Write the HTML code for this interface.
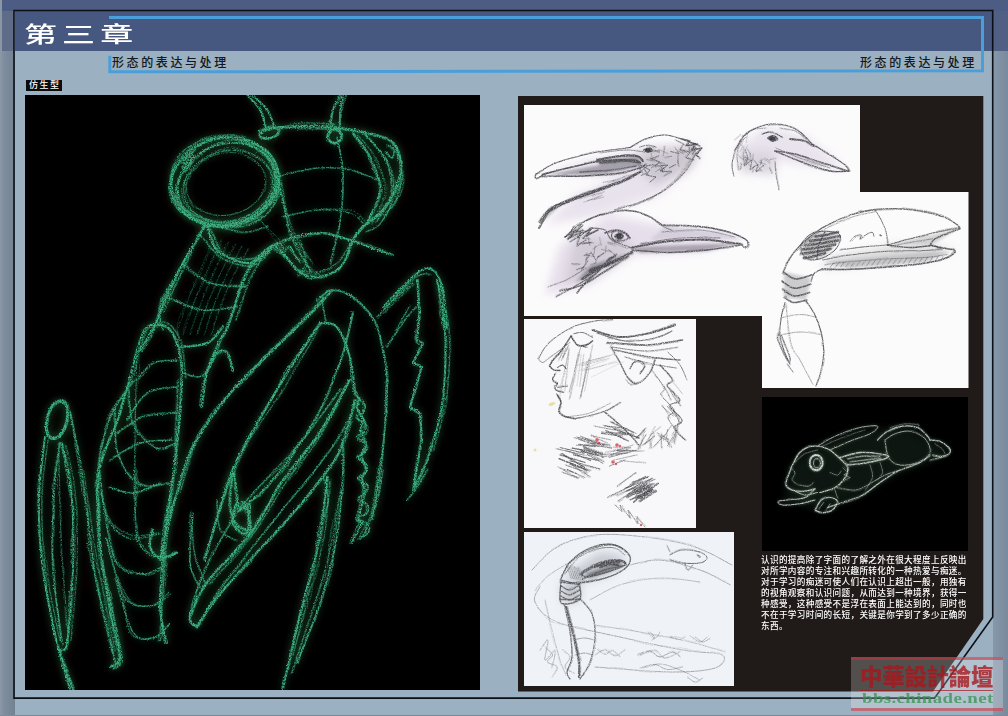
<!DOCTYPE html>
<html lang="zh">
<head>
<meta charset="utf-8">
<title>第三章 形态的表达与处理</title>
<style>
html,body{margin:0;padding:0;}
body{width:1008px;height:716px;overflow:hidden;position:relative;background:#9bb0c0;font-family:"Liberation Sans","Noto Sans CJK SC",sans-serif;}
.abs{position:absolute;}
#topstrip{left:0;top:0;width:1008px;height:11px;background:#4c5c83;}
#lm1{left:0;top:0;width:14px;height:51px;background:#5f6c88;}
#lm2{left:0;top:51px;width:14.5px;height:665px;background:linear-gradient(90deg,#8492a2,#728293);}
#ledge{left:0;top:0;width:2px;height:716px;background:#8a96a6;}
#rm1{left:993px;top:0;width:15px;height:51px;background:#525f84;}
#rm2{left:993px;top:51px;width:15px;height:665px;background:linear-gradient(90deg,#8797aa,#7a8a9d);}
#header{left:15px;top:11px;width:978px;height:40.4px;background:#465780;}
#title{left:24px;top:19.5px;font-size:22px;line-height:30px;color:#fff;white-space:nowrap;transform-origin:0 0;transform:scaleX(1.5);letter-spacing:3.4px;font-weight:500;}
.sub{top:54.6px;font-weight:500;font-size:12px;line-height:16px;color:#111820;letter-spacing:2.6px;white-space:nowrap;}
#label{left:26px;top:80px;width:36px;height:11px;background:#0c0c0c;color:#fff;font-size:9px;line-height:11px;font-weight:500;text-align:center;letter-spacing:1.5px;text-indent:1.5px;white-space:nowrap;}
#lpanel{left:25px;top:95px;width:455px;height:595px;background:#000;}
#para{left:761px;top:554.7px;width:215px;color:#fff;font-size:8.6px;line-height:11px;font-weight:500;white-space:nowrap;letter-spacing:.35px;}
.img{background:#fbfbfb;}
#wm{left:851px;top:657px;width:152px;height:48px;background:rgba(255,255,255,.23);border-top:3px solid rgba(200,50,60,.6);border-bottom:3px solid rgba(200,50,60,.6);}
#wmc{position:absolute;left:9px;top:4.6px;font-family:"Liberation Sans","Noto Sans CJK TC",sans-serif;font-weight:900;font-size:22.5px;line-height:26px;color:rgba(170,20,26,.78);white-space:nowrap;letter-spacing:-.3px;border-bottom:1.5px solid rgba(170,20,26,.7);height:25px;}
#wme{position:absolute;left:10.5px;top:27.8px;font-family:"Liberation Serif",serif;font-weight:bold;font-size:15.5px;line-height:20px;color:rgba(55,145,80,.75);white-space:nowrap;letter-spacing:.3px;transform-origin:0 0;transform:scaleX(1.22);}
</style>
</head>
<body>
<div class="abs" id="lm1"></div><div class="abs" id="lm2"></div>
<div class="abs" id="rm1"></div><div class="abs" id="rm2"></div>
<div class="abs" id="topstrip"></div>
<div class="abs" id="ledge"></div>
<div class="abs" id="header"></div>
<div class="abs" style="left:0;top:715px;width:1008px;height:1px;background:#7b8b9b"></div>
<!-- frame lines -->
<svg class="abs" style="left:0;top:0" width="1008" height="716" viewBox="0 0 1008 716">
  <path d="M14 698.1V10.5H992.7V617L934.5 698.1Z" fill="none" stroke="#0b0f18" stroke-width="1.6"/>
  <path d="M109 17.5H982.5V70.8L109.8 71.8V55.7" fill="none" stroke="#4a9fda" stroke-width="3"/>
  <path d="M518 96H983.3V619L933 691.5H518Z" fill="#201a18"/>
</svg>
<div class="abs" id="title">第三章</div>
<div class="abs sub" style="left:112px">形态的表达与处理</div>
<div class="abs sub" style="left:860px">形态的表达与处理</div>
<div class="abs" id="label">仿生型</div>
<svg class="abs" style="left:25px;top:95px" width="455" height="595" viewBox="25 95 455 595">
<defs>
<filter id="glow" x="-5%" y="-5%" width="110%" height="110%"><feGaussianBlur stdDeviation="3.5"/></filter>
<filter id="glow2" x="-10%" y="-10%" width="120%" height="120%"><feGaussianBlur stdDeviation="9"/></filter>
<filter id="chalk" x="-2%" y="-2%" width="104%" height="104%"><feTurbulence type="fractalNoise" baseFrequency="0.75" numOctaves="2" seed="3" result="n"/><feDisplacementMap in="SourceGraphic" in2="n" scale="2.6" xChannelSelector="R" yChannelSelector="G" result="d"/><feColorMatrix in="n" type="matrix" values="0 0 0 0 0 0 0 0 0 0 0 0 0 0 0 3.4 0 0 0 -1.05" result="a"/><feComposite in="d" in2="a" operator="in"/></filter>
<filter id="wob" x="-2%" y="-2%" width="104%" height="104%"><feTurbulence type="fractalNoise" baseFrequency="0.018" numOctaves="2" seed="11" result="w"/><feDisplacementMap in="SourceGraphic" in2="w" scale="9" xChannelSelector="R" yChannelSelector="G" result="d0"/><feTurbulence type="fractalNoise" baseFrequency="0.8" numOctaves="2" seed="8" result="n"/><feDisplacementMap in="d0" in2="n" scale="2.4" xChannelSelector="G" yChannelSelector="R" result="d"/><feColorMatrix in="n" type="matrix" values="0 0 0 0 0 0 0 0 0 0 0 0 0 0 0 0 3.0 0 0 -0.85" result="a"/><feComposite in="d" in2="a" operator="in"/></filter>
<g id="mpaths" fill="none" stroke-linecap="round" stroke-linejoin="round">
<path d="M260 132C263.8 131.2 271.3 127.8 283 127C294.7 126.2 316.7 126.2 330 127C343.3 127.8 353 129.8 363 132C373 134.2 383.8 135.8 390 140C396.2 144.2 398.7 149.8 400 157C401.3 164.2 400.8 174.2 398 183C395.2 191.8 388.8 202.7 383 210C377.2 217.3 368 222 363 227C358 232 355.7 235 353 240C350.3 245 349.7 252 347 257C344.3 262 342 266.7 337 270C332 273.3 323.2 276.7 317 277C310.8 277.3 305.7 276 300 272C294.3 268 287.5 257.5 283 253C278.5 248.5 274.7 246.3 273 245" stroke-width="2.5"/>
<path d="M353 133C355.8 137 365.5 147.5 370 157C374.5 166.5 380.5 179 380 190C379.5 201 369.2 217.5 367 223" stroke-width="2.2"/>
<path d="M363 132C366.8 136.7 381.3 149.5 386 160C390.7 170.5 392.7 184.7 391 195C389.3 205.3 378.5 217.5 376 222" stroke-width="1.6" opacity="0.80"/>
<path d="M337 137C338 143 342.5 158.7 343 173C343.5 187.3 342.2 208 340 223C337.8 238 331.7 256.3 330 263" stroke-width="1.6" opacity="0.80"/>
<path d="M278 177C280 185.8 284.7 214.5 290 230C295.3 245.5 306.7 263.3 310 270" stroke-width="1.8" opacity="0.90"/>
<path d="M277 177C283.7 175.5 304.8 169.2 317 168C329.2 166.8 340 168 350 170C360 172 372.5 178.3 377 180" stroke-width="1.3" opacity="0.70"/>
<path d="M283 217C288.7 215.8 305.8 210.7 317 210C328.2 209.3 342.3 210.8 350 213C357.7 215.2 360.8 221.3 363 223" stroke-width="1.3" opacity="0.70"/>
<path d="M273 245C276.3 243.7 284.7 239 293 237C301.3 235 313.5 232.5 323 233C332.5 233.5 341 237.2 350 240C359 242.8 369.8 247.5 377 250C384.2 252.5 390.3 254.2 393 255" stroke-width="2.0"/>
<path d="M273 245C274.2 244.7 278 242.2 280 243C282 243.8 283.3 249.5 285 250C286.7 250.5 288.3 245.2 290 246C291.7 246.8 293.3 252.3 295 255C296.7 257.7 299.2 260.8 300 262" stroke-width="1.6"/>
<path d="M255 215C260.8 220.8 279.2 240 290 250C300.8 260 315 270.8 320 275" stroke-width="1.0" opacity="0.60"/>
<path d="M300 240C301 243.7 306.3 256 306 262C305.7 268 299.3 273.7 298 276" stroke-width="1.2" opacity="0.70"/>
<path d="M388 145C389 145.8 393.3 147.8 394 150C394.7 152.2 393.3 157.7 392 158C390.7 158.3 387 153 386 152" stroke-width="1.4" opacity="0.90"/>
<path d="M248 95C250 97.5 256.8 104.2 260 110C263.2 115.8 265.8 126.7 267 130" stroke-width="1.8"/>
<path d="M253 95C255.3 97.5 263.3 104.5 267 110C270.7 115.5 273.7 125 275 128" stroke-width="1.8"/>
<path d="M340 95C338.8 97.5 334.7 103.7 333 110C331.3 116.3 330.5 129.2 330 133" stroke-width="1.8"/>
<path d="M343 95C342.5 98 340.5 106.7 340 113C339.5 119.3 340 129.7 340 133" stroke-width="1.8"/>
<path d="M207 223C203 229.7 189.7 250.7 183 263C176.3 275.3 172 286 167 297C162 308 157.5 320.2 153 329C148.5 337.8 142.2 346.5 140 350" stroke-width="2.4"/>
<path d="M273 245C269.7 248 258.5 255.5 253 263C247.5 270.5 244.3 279 240 290C235.7 301 230.3 320.7 227 329C223.7 337.3 223.3 332.7 220 340C216.7 347.3 210 361.8 207 373C204 384.2 202.8 401.3 202 407" stroke-width="2.4"/>
<path d="M207 223C208.7 227.5 209.8 243.3 217 250C224.2 256.7 240.7 263.5 250 263C259.3 262.5 269.2 249.7 273 247" stroke-width="2.2"/>
<path d="M210 228C212.5 232.5 217.5 250 225 255C232.5 260 247.8 259.2 255 258C262.2 256.8 265.8 249.7 268 248" stroke-width="1.4" opacity="0.70"/>
<path d="M183 263C187.5 266.3 199.3 279 210 283C220.7 287 240.8 286.3 247 287" stroke-width="1.6" opacity="0.80"/>
<path d="M167 297C172.5 299.2 188.3 308.3 200 310C211.7 311.7 230.8 307.5 237 307" stroke-width="1.6" opacity="0.80"/>
<path d="M173 280C170.8 284.5 161.7 298.7 160 307C158.3 315.3 162.5 326.2 163 330" stroke-width="1.6" opacity="0.80"/>
<path d="M180 347C184.5 346.3 199.8 346.3 207 343C214.2 339.7 220.3 329.7 223 327" stroke-width="2.0"/>
<path d="M183 373C185.8 373.7 195.5 378 200 377C204.5 376 208.3 368.7 210 367" stroke-width="1.6" opacity="0.80"/>
<path d="M214 238C210.3 246.7 198.3 273.8 192 290C185.7 306.2 178.7 327.5 176 335" stroke-width="0.9" opacity="0.45"/>
<path d="M221 240C217.3 248.3 205.3 274.2 199 290C192.7 305.8 185.7 327.5 183 335" stroke-width="0.9" opacity="0.45"/>
<path d="M228 242C224.3 250 212.3 274.5 206 290C199.7 305.5 192.7 327.5 190 335" stroke-width="0.9" opacity="0.45"/>
<path d="M235 244C231.3 251.7 219.3 274.8 213 290C206.7 305.2 199.7 327.5 197 335" stroke-width="0.9" opacity="0.45"/>
<path d="M242 246C238.3 253.3 226.3 275.2 220 290C213.7 304.8 206.7 327.5 204 335" stroke-width="0.9" opacity="0.45"/>
<path d="M249 248C245.3 255 233.3 275.5 227 290C220.7 304.5 213.7 327.5 211 335" stroke-width="0.9" opacity="0.45"/>
<path d="M137 350C134.2 360.5 126.2 393.5 120 413C113.8 432.5 103.5 449.2 100 467C96.5 484.8 98.7 504.5 99 520C99.3 535.5 100.2 545 102 560C103.8 575 107 593.8 110 610C113 626.2 120 647.5 120 657C120 666.5 111.7 665.3 110 667" stroke-width="2.2"/>
<path d="M137 350C138.7 346.2 142 330.8 147 327C152 323.2 161.8 323.7 167 327C172.2 330.3 175.5 338.2 178 347C180.5 355.8 182.2 363.3 182 380C181.8 396.7 179.5 423.8 177 447C174.5 470.2 169.8 493 167 519C164.2 545 160 582.3 160 603C160 623.7 165.8 636.3 167 643" stroke-width="2.2"/>
<path d="M137 350C136.7 363.3 135.5 405 135 430C134.5 455 134.2 488.3 134 500" stroke-width="1.2" opacity="0.60"/>
<path d="M137 380C139.7 377.2 146.3 366.3 153 363C159.7 359.7 173 360.5 177 360" stroke-width="1.5" opacity="0.80"/>
<path d="M127 420C130.3 415.5 138.7 398.5 147 393C155.3 387.5 172 388 177 387" stroke-width="1.5" opacity="0.80"/>
<path d="M117 433C121.3 430.3 133 420.3 143 417C153 413.7 171.3 413.7 177 413" stroke-width="1.5" opacity="0.80"/>
<path d="M110 460C115 457.2 129.5 446.3 140 443C150.5 439.7 167.5 440.5 173 440" stroke-width="1.5" opacity="0.80"/>
<path d="M110 487C113.8 488 124.7 493.7 133 493C141.3 492.3 155.5 484.7 160 483" stroke-width="1.5" opacity="0.80"/>
<path d="M153 530C152.5 532.8 148.8 542.3 150 547C151.2 551.7 155.5 557 160 558C164.5 559 174.2 553.8 177 553" stroke-width="2.4"/>
<path d="M135 470C135.3 481.2 134 522.5 137 537C140 551.5 150.3 553.7 153 557" stroke-width="1.6" opacity="0.80"/>
<path d="M45 437C44.2 444.2 41 466.2 40 480C39 493.8 38.5 505 39 520C39.5 535 40 549.5 43 570C46 590.5 52.5 623.2 57 643C61.5 662.8 67.8 681.3 70 689" stroke-width="2.0"/>
<path d="M70 413C71.7 420.8 77 442.2 80 460C83 477.8 85.3 500 88 520C90.7 540 92.7 561.7 96 580C99.3 598.3 104.7 615.8 108 630C111.3 644.2 114.7 659.2 116 665" stroke-width="1.8" opacity="0.90"/>
<path d="M60 443C59.2 449.2 56.2 467.3 55 480C53.8 492.7 53.3 504 53 519C52.7 534 51.5 549.3 53 570C54.5 590.7 60.5 630.8 62 643" stroke-width="1.8" opacity="0.90"/>
<path d="M62 443C63.3 449.2 68.2 467.3 70 480C71.8 492.7 72.5 504 73 519C73.5 534 74 549.3 73 570C72 590.7 69.2 629.3 67 643C64.8 656.7 59 644.3 60 652C61 659.7 70.8 682.8 73 689" stroke-width="2.0"/>
<path d="M333 290C325.3 297.8 303.7 320.3 287 337C270.3 353.7 248.7 371.7 233 390C217.3 408.3 202.3 429.8 193 447C183.7 464.2 180.8 481 177 493C173.2 505 172.8 507.8 170 519C167.2 530.2 161.7 553.2 160 560" stroke-width="2.4"/>
<path d="M320 323C313.8 332.5 296.8 357.2 283 380C269.2 402.8 248 436.8 237 460C226 483.2 222.3 502.3 217 519C211.7 535.7 207 553.2 205 560" stroke-width="2.4"/>
<path d="M353 313C350.8 321.3 346.7 344.7 340 363C333.3 381.3 324.2 403.5 313 423C301.8 442.5 285.2 465.5 273 480C260.8 494.5 245.5 505 240 510" stroke-width="2.0" opacity="0.90"/>
<path d="M317 300C319.7 298.3 326.3 290 333 290C339.7 290 349.7 293.8 357 300C364.3 306.2 372 313.7 377 327C382 340.3 386 360 387 380C388 400 385.3 423.8 383 447C380.7 470.2 374.7 507 373 519" stroke-width="1.8" opacity="0.90"/>
<path d="M320 323C322.8 323.7 332 321.3 337 327C342 332.7 347 346.5 350 357C353 367.5 354.2 384.5 355 390" stroke-width="2.2"/>
<path d="M322 300L326 322" stroke-width="1.4" opacity="0.80"/>
<path d="M355 390L360 400L357 408L364 420L360 430L366 445L361 455L367 470L362 478L365 493L358 520L362 523L352 543" stroke-width="2.0"/>
<path d="M383 470C382 475.5 380.3 491.8 377 503C373.7 514.2 365.3 531.3 363 537" stroke-width="1.4" opacity="0.80"/>
<path d="M350 380C344.5 389.5 328.2 420.3 317 437C305.8 453.7 293.7 464.5 283 480C272.3 495.5 265.7 512.8 253 530C240.3 547.2 217.5 568.5 207 583C196.5 597.5 191.7 609.7 190 617C188.3 624.3 195.8 625.3 197 627" stroke-width="2.4"/>
<path d="M355 400C352.5 408.3 345.8 436.7 340 450C334.2 463.3 328.8 468.3 320 480C311.2 491.7 299.2 506.2 287 520C274.8 533.8 259.3 549.2 247 563C234.7 576.8 221.3 592.3 213 603C204.7 613.7 199.7 623 197 627" stroke-width="2.2"/>
<path d="M237 503C236.3 506.3 231.3 518 233 523C234.7 528 244.2 536.3 247 533C249.8 529.7 249.5 508 250 503" stroke-width="2.4"/>
<path d="M233 467C233.7 471.3 235.8 485.8 237 493C238.2 500.2 237.8 508.3 240 510C242.2 511.7 248.3 504.2 250 503" stroke-width="2.0"/>
<path d="M193 513C192.5 521.3 188.8 550.7 190 563C191.2 575.3 198.3 583 200 587" stroke-width="1.6" opacity="0.80"/>
<path d="M217 500C217.5 505 216.7 523.3 220 530C223.3 536.7 234.2 538.3 237 540" stroke-width="1.4" opacity="0.70"/>
<path d="M207 373C208.7 369.7 213.7 356.5 217 353C220.3 349.5 224.3 349.2 227 352C229.7 354.8 232 367 233 370" stroke-width="2.2"/>
<path d="M327 477C325.8 487 324 516 320 537C316 558 308 583 303 603C298 623 293.3 642.7 290 657C286.7 671.3 284.2 683.7 283 689" stroke-width="2.2"/>
<path d="M342 440C342.2 445 343.8 453.8 343 470C342.2 486.2 340.8 514.8 337 537C333.2 559.2 326.7 582 320 603C313.3 624 300.8 653 297 663" stroke-width="1.8" opacity="0.90"/>
<path d="M323 477C323.8 480.3 327.7 490 328 497C328.3 504 325.5 515.3 325 519" stroke-width="1.4" opacity="0.80"/>
<path d="M383 307C388.7 301.3 408.7 279.2 417 273C425.3 266.8 428.7 267.2 433 270C437.3 272.8 440.7 280.3 443 290C445.3 299.7 446.3 321.7 447 328" stroke-width="2.0"/>
<path d="M437 280C438.3 288.3 444 310.5 445 330C446 349.5 445.5 376.5 443 397C440.5 417.5 435 437.5 430 453C425 468.5 415.8 483.8 413 490" stroke-width="2.0"/>
<path d="M417 280L420 313L417 340L423 343L413 363L422 367L410 407L420 413L422 440L413 490" stroke-width="2.2"/>
<path d="M377 317C380.3 313.7 391 302.7 397 297C403 291.3 410.3 285.3 413 283" stroke-width="1.6" opacity="0.80"/>
<path d="M387 347C390.3 342 402 323.7 407 317C412 310.3 415.3 308.7 417 307" stroke-width="1.6" opacity="0.80"/>
<path d="M427 470C425.3 472.8 420.3 482 417 487C413.7 492 408.7 497.8 407 500" stroke-width="1.4" opacity="0.80"/>
<path d="M396 330L410 305" stroke-width="1.2" opacity="0.70"/>
<path d="M365 134C368.8 138.7 383.3 151.7 388 162C392.7 172.3 394.3 185.7 393 196C391.7 206.3 384.5 218 380 224C375.5 230 368.3 230.7 366 232" stroke-width="1.4" opacity="0.70"/>
<path d="M358 135C361.2 139.2 372.5 150.5 377 160C381.5 169.5 385.8 181.3 385 192C384.2 202.7 374.2 218.7 372 224" stroke-width="1.2" opacity="0.60"/>
<path d="M396 150C397 154.2 402 166.7 402 175C402 183.3 399 193.2 396 200C393 206.8 386 213.3 384 216" stroke-width="1.6" opacity="0.80"/>
<path d="M283 128C285.8 127.2 291.3 123.7 300 123C308.7 122.3 329.2 123.8 335 124" stroke-width="1.4" opacity="0.70"/>
<path d="M280 190C282.5 197.5 289.7 223 295 235C300.3 247 309.2 257.5 312 262" stroke-width="1.2" opacity="0.60"/>
<path d="M300 270C303 270.3 311.7 273.3 318 272C324.3 270.7 332.7 266.7 338 262C343.3 257.3 348 247 350 244" stroke-width="1.4" opacity="0.70"/>
<path d="M215 226C220 227 236.2 232 245 232C253.8 232 264.2 227 268 226" stroke-width="1.4" opacity="0.70"/>
<path d="M200 235C203.7 238.8 213.3 252.8 222 258C230.7 263.2 244 267 252 266C260 265 267 254.3 270 252" stroke-width="1.4" opacity="0.70"/>
<path d="M192 250C189.7 255 182.7 269.7 178 280C173.3 290.3 166.3 306.7 164 312" stroke-width="1.4" opacity="0.70"/>
<path d="M262 258C259.7 262.5 252.3 274.7 248 285C243.7 295.3 238 314.2 236 320" stroke-width="1.4" opacity="0.70"/>
<path d="M142 330C145.8 328.7 158.7 320.3 165 322C171.3 323.7 176.5 330.7 180 340C183.5 349.3 185 371.7 186 378" stroke-width="1.3" opacity="0.60"/>
<path d="M325 296C317.8 303.3 296.8 325 282 340C267.2 355 250 369.3 236 386C222 402.7 207.3 422.3 198 440C188.7 457.7 183 483.3 180 492" stroke-width="1.3" opacity="0.65"/>
<path d="M318 330C312.3 339.7 297 367 284 388C271 409 250.7 435.3 240 456C229.3 476.7 223.3 502.7 220 512" stroke-width="1.2" opacity="0.60"/>
<path d="M384 310C389 304.7 406.3 284 414 278C421.7 272 427.3 274.7 430 274" stroke-width="1.3" opacity="0.70"/>
<path d="M440 285C441.5 292.5 447.8 311.8 449 330C450.2 348.2 449.5 374 447 394C444.5 414 436.2 440.7 434 450" stroke-width="1.3" opacity="0.65"/>
<path d="M330 480C329 489.7 327.8 517.7 324 538C320.2 558.3 312.2 582.5 307 602C301.8 621.5 295.3 646.2 293 655" stroke-width="1.3" opacity="0.65"/>
<path d="M348 384C343 393.3 328.3 423.7 318 440C307.7 456.3 296.3 467 286 482C275.7 497 268.7 513 256 530C243.3 547 217.7 575 210 584" stroke-width="1.3" opacity="0.65"/>
<path d="M48 440C47.2 447 44 468.3 43 482C42 495.7 41.5 507.3 42 522C42.5 536.7 43 550.3 46 570C49 589.7 57.7 628.3 60 640" stroke-width="1.2" opacity="0.60"/>
<path d="M66 445C67.3 451.2 72.2 469.5 74 482C75.8 494.5 76.5 505.3 77 520C77.5 534.7 78 550 77 570C76 590 72 628.3 71 640" stroke-width="1.2" opacity="0.60"/>
<path d="M99.5 461.3C100.6 470.3 101.4 502.6 106.3 515.4C111.2 528.2 119.8 535 128.8 538C137.9 541 155.2 534.3 160.4 533.5" stroke-width="1.6" opacity="0.80"/>
<path d="M101.7 492.9C104 504.2 108.5 547 115.3 560.6C122.1 574.1 134.1 573.4 142.4 574.1C150.7 574.9 161.2 566.6 165 565.1" stroke-width="1.6" opacity="0.80"/>
<path d="M106.3 538C109.3 547.8 116.8 585.4 124.3 596.7C131.8 608 143.9 606.5 151.4 605.7C158.9 605 166.5 594.4 169.5 592.2" stroke-width="1.6" opacity="0.80"/>
<path d="M115.3 578.6C118.3 587.7 126.6 623 133.4 632.8C140.1 642.6 149.9 638.8 155.9 637.3C161.9 635.8 167.2 626 169.5 623.8" stroke-width="1.6" opacity="0.80"/>
<path d="M115.3 407.1C115.7 414.6 113.8 439.4 117.6 452.2C121.3 465 129.2 478.6 137.9 483.8C146.5 489.1 164.2 483.8 169.5 483.8" stroke-width="1.6" opacity="0.80"/>
<path d="M128.8 389C129.6 395 128.8 415.4 133.4 425.1C137.9 434.9 148.8 444.7 155.9 447.7C163.1 450.7 172.9 444 176.2 443.2" stroke-width="1.6" opacity="0.80"/>
<path d="M133.4 380C129.6 386 116.4 402.6 110.8 416.1C105.1 429.7 101.7 444.7 99.5 461.3C97.2 477.8 96.5 497.4 97.2 515.4C98 533.5 101 551.6 104 569.6C107 587.7 112.3 608.7 115.3 623.8C118.3 638.8 122.4 652.4 122.1 659.9C121.7 667.4 114.5 667.4 113 668.9" stroke-width="1.8" opacity="0.80"/>
<path d="M178.5 380C177.7 395 176.2 440.2 174 470.3C171.7 500.4 167.2 532 165 560.6C162.7 589.2 161.2 628.3 160.4 641.9" stroke-width="1.5" opacity="0.70"/>
<path d="M83.7 470.3C85.9 485.3 92 530.5 97.2 560.6C102.5 590.7 112.3 635.8 115.3 650.9" stroke-width="1.2" opacity="0.60"/>
<path d="M58.9 443.2C59.2 459 59.6 506.4 61.1 538C62.6 569.6 66.8 617 67.9 632.8" stroke-width="1.2" opacity="0.60"/>
<path d="M341 389C333.5 398.8 312.4 428.2 295.9 447.7C279.3 467.3 256.8 486.1 241.7 506.4C226.7 526.7 214.2 551.6 205.6 569.6C196.9 587.7 191.3 605.4 189.8 614.8C188.3 624.2 195.4 624.2 196.6 626" stroke-width="1.6" opacity="0.75"/>
<path d="M359.1 398.1C354.6 406.3 345.5 428.2 332 447.7C318.5 467.3 295.1 493.6 277.8 515.4C260.5 537.3 241.7 560.2 228.2 578.6C214.6 597.1 201.8 618.1 196.6 626" stroke-width="1.6" opacity="0.75"/>
<path d="M232.7 470.3C232.3 476.3 229.7 497.4 230.4 506.4C231.2 515.4 233.8 520.7 237.2 524.5C240.6 528.2 249.2 532 250.7 529C252.2 526 247.7 510.9 246.2 506.4C244.7 501.9 242.5 502.6 241.7 501.9" stroke-width="2.2" opacity="0.90"/>
<path d="M192 515.4C192.4 521.5 192 540.3 194.3 551.6C196.6 562.8 203.7 577.9 205.6 583.2" stroke-width="1.4" opacity="0.70"/>
<path d="M341 488.4C338.8 500.4 333.5 536.5 327.5 560.6C321.5 584.7 310.9 614 304.9 632.8C298.9 651.6 293.6 666.7 291.4 673.5" stroke-width="1.4" opacity="0.70"/>
<path d="M354.6 393.5C356.2 395.2 363 400.5 364.5 403.5C366 406.5 365 409.3 363.6 411.6C362.2 413.9 355.7 415 355.9 417C356.2 419.1 363.8 421.3 365.2 423.8C366.6 426.3 365.7 429.7 364.3 431.9C362.8 434.2 356.3 435.3 356.6 437.3C356.9 439.4 364.5 441.6 365.9 444.1C367.2 446.6 366.4 450 365 452.2C363.5 454.5 357 455.6 357.3 457.7C357.5 459.7 365.1 461.9 366.5 464.4C367.9 466.9 367.1 470.3 365.6 472.6C364.2 474.8 357.7 475.9 358 478C358.2 480 365.8 482.3 367.2 484.7C368.6 487.2 367.7 490.6 366.3 492.9C364.9 495.1 358.4 496.3 358.6 498.3C358.9 500.3 366.5 502.6 367.9 505.1C369.3 507.5 368.4 510.9 367 513.2C365.6 515.4 359 516.6 359.3 518.6C359.6 520.6 367.2 522.9 368.6 525.4C370 527.9 369.1 531.2 367.7 533.5C366.2 535.8 361.3 538 360 538.9" stroke-width="1.8" opacity="0.90"/>
<path d="M386.2 380C385.4 395 384.7 445.5 381.7 470.3C378.6 495.1 370.4 519.2 368.1 529" stroke-width="1.2" opacity="0.60"/>
<ellipse cx="225" cy="182" rx="54" ry="44" transform="rotate(-10 225 182)" stroke-width="2.6"/>
<ellipse cx="227" cy="184" rx="50" ry="40" transform="rotate(-18 227 184)" stroke-width="1.9"/>
<ellipse cx="223" cy="180" rx="52" ry="43" transform="rotate(4 223 180)" stroke-width="1.6" opacity=".75"/>
<ellipse cx="228" cy="186" rx="45" ry="35" transform="rotate(-14 228 186)" stroke-width="1.5" opacity=".7"/>
<ellipse cx="226" cy="184" rx="40" ry="31" transform="rotate(-12 226 184)" stroke-width="1.2" opacity=".55"/>
<path d="M176 196C182 220 214 234 250 224C268 218 276 206 279 190" stroke-width="1.6" opacity=".7"/>
<path d="M182 206C196 226 232 232 262 216" stroke-width="1.3" opacity=".6"/>
<ellipse cx="270" cy="133" rx="10" ry="5" transform="rotate(-15 270 133)" stroke-width="2.4"/>
<ellipse cx="335" cy="136" rx="7" ry="7" stroke-width="2.6"/>
<ellipse cx="57" cy="420" rx="10" ry="19" transform="rotate(14 57 420)" stroke-width="3"/>
</g>
</defs>
<rect x="25" y="95" width="455" height="595" fill="#000"/>
<use href="#mpaths" stroke="#2a1c10" filter="url(#glow2)" opacity=".9" stroke-width="16"/>
<use href="#mpaths" stroke="#1f7a55" filter="url(#glow)" opacity=".85" stroke-width="4.2"/>
<g filter="url(#wob)" opacity=".75"><use href="#mpaths" stroke="#38a87b"/></g>
<g filter="url(#chalk)">
<use href="#mpaths" stroke="#42b586"/>
<ellipse cx="188" cy="162" rx="5" ry="11" transform="rotate(25 188 162)" fill="#42b586" opacity=".8"/>
</g>
</svg>
<svg class="abs" style="left:518px;top:96px" width="466" height="596" viewBox="518 96 466 596">
<defs>
<filter id="pencil" x="-2%" y="-2%" width="104%" height="104%"><feTurbulence type="fractalNoise" baseFrequency="0.9" numOctaves="2" seed="5" result="n"/><feDisplacementMap in="SourceGraphic" in2="n" scale="1.4" xChannelSelector="R" yChannelSelector="G" result="d"/><feColorMatrix in="n" type="matrix" values="0 0 0 0 0 0 0 0 0 0 0 0 0 0 0 2.2 0 0 0 -0.3" result="a"/><feComposite in="d" in2="a" operator="in"/></filter>
<filter id="pwob" x="-2%" y="-2%" width="104%" height="104%"><feTurbulence type="fractalNoise" baseFrequency="0.03" numOctaves="2" seed="21" result="w"/><feDisplacementMap in="SourceGraphic" in2="w" scale="5" xChannelSelector="R" yChannelSelector="G" result="d0"/><feTurbulence type="fractalNoise" baseFrequency="0.9" numOctaves="2" seed="9" result="n"/><feColorMatrix in="n" type="matrix" values="0 0 0 0 0 0 0 0 0 0 0 0 0 0 0 0 2.2 0 0 -0.4" result="a"/><feComposite in="d0" in2="a" operator="in"/></filter>
<filter id="soft" x="-20%" y="-20%" width="140%" height="140%"><feGaussianBlur stdDeviation="5"/></filter>
<filter id="soft2" x="-20%" y="-20%" width="140%" height="140%"><feGaussianBlur stdDeviation="1.8"/></filter>
<filter id="rglow" x="-10%" y="-10%" width="120%" height="120%"><feGaussianBlur stdDeviation="1.6"/></filter>
<pattern id="grille" width="4.4" height="4.4" patternUnits="userSpaceOnUse" patternTransform="rotate(-16)"><rect width="4.4" height="4.4" fill="#d9d9d9"/><rect width="4.4" height="2.7" fill="#5c5c5f"/></pattern>
<g id="rabbit" fill="none" stroke-linecap="round" stroke-linejoin="round">
<path d="M792.5 465C793.8 462.9 796.7 455.6 800 452.5C803.3 449.4 807.9 446.9 812.5 446.2C817.1 445.6 822.9 446.7 827.5 448.8C832.1 450.8 836.7 455.6 840 458.8C843.3 461.9 846.7 464.4 847.5 467.5C848.3 470.6 847.1 474.2 845 477.5C842.9 480.8 839.2 485 835 487.5C830.8 490 822.5 491.7 820 492.5" stroke-width="1.2" opacity="0.90"/>
<path d="M792.5 465C791.7 467.1 788.5 474.2 787.5 477.5C786.5 480.8 785.4 482.9 786.2 485C787.1 487.1 789.4 489 792.5 490C795.6 491 801.2 491.5 805 491.2C808.8 491 813.3 489.2 815 488.8" stroke-width="1.2" opacity="0.90"/>
<path d="M792.5 490C794.6 490.8 800.8 494.6 805 495C809.2 495.4 815.4 492.9 817.5 492.5" stroke-width="1.0" opacity="0.80"/>
<path d="M790 467.5C790.8 468.3 794.6 470.4 795 472.5C795.4 474.6 791.9 477.9 792.5 480C793.1 482.1 797.7 484.2 798.8 485" stroke-width="0.8" opacity="0.55"/>
<path d="M795 462.5C796.7 461 801.2 455.8 805 453.8C808.8 451.7 815.4 450.6 817.5 450" stroke-width="0.8" opacity="0.50"/>
<path d="M800 485C801.5 485.2 806.5 486.7 808.8 486.2C811 485.8 812.9 483.1 813.8 482.5" stroke-width="0.9" opacity="0.60"/>
<path d="M817.5 446.2C820.8 444.4 830.4 438.1 837.5 435C844.6 431.9 853.3 429 860 427.5C866.7 426 875.8 425.2 877.5 426.2C879.2 427.3 874.6 431.2 870 433.8C865.4 436.2 856.7 438.5 850 441.2C843.3 444 833.3 448.5 830 450" stroke-width="1.0" opacity="0.70"/>
<path d="M822.5 446.2C825.8 444.8 835.4 440.2 842.5 437.5C849.6 434.8 861.2 431.2 865 430" stroke-width="0.7" opacity="0.45"/>
<path d="M840 457.5C843.3 456.7 853.3 453.1 860 452.5C866.7 451.9 875.2 453.1 880 453.8C884.8 454.4 888.8 455.2 888.8 456.2C888.8 457.3 884.8 458.8 880 460C875.2 461.2 865.4 462.9 860 463.8C854.6 464.6 849.6 464.8 847.5 465" stroke-width="1.3" opacity="0.90"/>
<path d="M847.5 458.8C850 458.3 857.1 456.6 862.5 456.2C867.9 455.9 877.1 456.5 880 456.5" stroke-width="1.6" opacity="0.55"/>
<path d="M850 461.8C852.5 461.5 859.8 460.6 865 460C870.2 459.4 878.5 458.5 881.2 458.2" stroke-width="1.4" opacity="0.50"/>
<path d="M877.5 440C879.2 438.5 883.3 433.5 887.5 431.2C891.7 429 897.5 426.9 902.5 426.2C907.5 425.6 913.3 425.8 917.5 427.5C921.7 429.2 925.4 434.2 927.5 436.2C929.6 438.3 929.6 439.4 930 440" stroke-width="1.2" opacity="0.85"/>
<path d="M890 427.5C892.5 426.9 900.2 424.2 905 423.8C909.8 423.3 917.1 424.2 918.8 425C920.4 425.8 915.6 428.1 915 428.8" stroke-width="0.8" opacity="0.50"/>
<path d="M885 440C886.7 439 890.8 435.2 895 433.8C899.2 432.3 905 430.4 910 431.2C915 432.1 921.7 435.2 925 438.8C928.3 442.3 931.2 448.5 930 452.5C928.8 456.5 922.5 460.4 917.5 462.5C912.5 464.6 904.8 465.8 900 465C895.2 464.2 891.2 461.7 888.8 457.5C886.2 453.3 885.6 442.9 885 440" stroke-width="1.0" opacity="0.65"/>
<path d="M930 440C931.7 440.2 936.9 440 940 441.2C943.1 442.5 947.1 445.6 948.8 447.5C950.4 449.4 951 451 950 452.5C949 454 945.4 455.8 942.5 456.2C939.6 456.7 934.2 455.2 932.5 455" stroke-width="1.2" opacity="0.85"/>
<path d="M930 460C931.7 459.6 937.1 458.3 940 457.5C942.9 456.7 946.2 455.4 947.5 455" stroke-width="1.0" opacity="0.70"/>
<path d="M935 443.8C936.2 444.6 940.8 447.1 942.5 448.8C944.2 450.4 944.6 452.9 945 453.8" stroke-width="0.8" opacity="0.50"/>
<path d="M930 455C928.3 456.2 923.8 460.4 920 462.5C916.2 464.6 911.7 465.8 907.5 467.5C903.3 469.2 899.6 470 895 472.5C890.4 475 885.4 478.8 880 482.5C874.6 486.2 868.8 491.7 862.5 495C856.2 498.3 848.3 500.4 842.5 502.5C836.7 504.6 830 506.7 827.5 507.5" stroke-width="1.2" opacity="0.85"/>
<path d="M837.5 487.5C840.4 487.9 850 490.4 855 490C860 489.6 862.5 487.5 867.5 485C872.5 482.5 879.6 477.5 885 475C890.4 472.5 897.5 470.8 900 470" stroke-width="0.9" opacity="0.60"/>
<path d="M870 465C870.4 467.1 873.3 473.3 872.5 477.5C871.7 481.7 866.2 487.9 865 490" stroke-width="0.8" opacity="0.50"/>
<path d="M880 462.5C880.4 464.2 882.9 469.6 882.5 472.5C882.1 475.4 878.3 478.8 877.5 480" stroke-width="0.8" opacity="0.45"/>
<path d="M815 488.8C813.3 490.2 809.6 495.6 805 497.5C800.4 499.4 791.9 499.4 787.5 500C783.1 500.6 779.6 500.4 778.8 501.2C777.9 502.1 779 504.6 782.5 505C786 505.4 794.6 504.6 800 503.8C805.4 502.9 812.5 500.6 815 500" stroke-width="1.1" opacity="0.80"/>
<path d="M815 510C816 508.3 818.8 502.1 821.2 500C823.8 497.9 827.3 497.3 830 497.5C832.7 497.7 837.1 499.2 837.5 501.2C837.9 503.3 835 508.1 832.5 510C830 511.9 825.4 512.5 822.5 512.5C819.6 512.5 816.2 510.4 815 510" stroke-width="1.2" opacity="0.85"/>
<path d="M818.8 508.8L823.8 502.5" stroke-width="0.8" opacity="0.60"/>
<path d="M826.2 510.5L830 503.8" stroke-width="0.8" opacity="0.60"/>
<path d="M835 490L837.5 497.5" stroke-width="0.8" opacity="0.50"/>
<path d="M842.5 467.5L847.5 472.5L843.8 475L850 477.5L845 480" stroke-width="0.8" opacity="0.50"/>
<path d="M830 472.5C831.2 472.9 835.6 475.2 837.5 475C839.4 474.8 840.6 471.9 841.2 471.2" stroke-width="0.8" opacity="0.50"/>
<ellipse cx="816.2" cy="462.5" rx="6.500" ry="7.500" stroke-width="1.8"/><ellipse cx="817" cy="463" rx="3.500" ry="4.500" stroke-width="1" opacity=".6"/>
</g>
<g id="pen" fill="none" stroke-linecap="round" stroke-linejoin="round">
<path d="M536 174C539.5 172.1 547.2 166.1 557 162.5C566.8 158.9 582.8 155 595 152.5C607.2 150 624.2 148.3 630 147.5" stroke-width="1.2" opacity="0.80"/>
<path d="M630 147.5C632.5 146.1 639.2 141.1 645 139C650.8 136.9 658.8 135 665 135C671.2 135 676.2 137.2 682 139C687.8 140.8 697 144.8 700 146" stroke-width="1.2" opacity="0.85"/>
<path d="M536 174C535.8 174.5 534.7 176.3 535 177C535.3 177.7 536.8 178.3 538 178C539.2 177.7 541.3 175.5 542 175" stroke-width="1.1" opacity="0.90"/>
<path d="M542 174.5C546.7 173.3 560 169.8 570 167.5C580 165.2 591.7 162.2 602 161C612.3 159.8 625.7 159.8 632 160C638.3 160.2 638.7 162.1 640 162.5" stroke-width="1.6" opacity="0.90"/>
<path d="M542 176C548.7 176 569 176.5 582 176C595 175.5 610.3 174.3 620 173C629.7 171.7 635.7 169.5 640 168C644.3 166.5 645 164.7 646 164" stroke-width="1.4" opacity="0.85"/>
<path d="M597 160C600.8 159.3 613.3 156.7 620 156C626.7 155.3 633.2 155.2 637 156C640.8 156.8 642 160.2 643 161" stroke-width="2.2" opacity="0.90"/>
<path d="M600 163C604.2 162.7 618.3 161 625 161C631.7 161 637.5 162.7 640 163" stroke-width="1.8" opacity="0.70"/>
<path d="M580 172C585 171.7 600.7 171 610 170C619.3 169 631.7 166.7 636 166" stroke-width="1.5" opacity="0.60"/>
<path d="M640 172C636.7 173.7 629.7 178.2 620 182C610.3 185.8 593.3 190.7 582 195C570.7 199.3 559 203.5 552 208C545 212.5 542 219.7 540 222" stroke-width="2.4" opacity="0.80"/>
<path d="M604 188C599.2 189.8 583.7 195.5 575 199C566.3 202.5 557 205.8 552 209C547 212.2 547.2 214.8 545 218C542.8 221.2 540 226.3 539 228" stroke-width="2.0" opacity="0.70"/>
<path d="M695 155C693.3 157.8 690 166.2 685 172C680 177.8 672.5 185 665 190C657.5 195 648.3 198.7 640 202C631.7 205.3 619.2 208.7 615 210" stroke-width="1.1" opacity="0.70"/>
<path d="M690 160C687.7 163.3 681.8 174 676 180C670.2 186 662.7 191.5 655 196C647.3 200.5 634.2 205.2 630 207" stroke-width="0.8" opacity="0.50"/>
<path d="M644 150C644.8 149.7 647.7 148 649 148C650.3 148 652.2 149.3 652 150C651.8 150.7 649.3 152 648 152C646.7 152 644.7 150.3 644 150" stroke-width="1.6" opacity="0.95"/>
<path d="M640 147C641.3 146.7 645.3 145 648 145C650.7 145 654.7 146.7 656 147" stroke-width="1.2" opacity="0.80"/>
<path d="M682 139L690 141L686 146L696 144L692 150L702 148L696 155L700 158" stroke-width="1.3" opacity="0.85"/>
<path d="M676 140L684 144L680 150L690 152L686 158L694 160" stroke-width="1.0" opacity="0.70"/>
<path d="M650 158L660 162L655 166L668 165L660 171L672 172L664 176" stroke-width="1.0" opacity="0.65"/>
<path d="M640 165L650 170L646 175L656 177L650 182" stroke-width="1.0" opacity="0.60"/>
<path d="M565 237C567.8 234.7 575 227 582 223C589 219 598.7 215 607 213C615.3 211 624.8 210.3 632 211C639.2 211.7 645 214.7 650 217C655 219.3 660 223.7 662 225" stroke-width="1.3" opacity="0.85"/>
<path d="M662 225C667.5 225.2 684.5 225 695 226C705.5 227 716.7 228.8 725 231C733.3 233.2 741.2 236.7 745 239C748.8 241.3 748.2 243.7 748 245C747.8 246.3 745.2 247.2 744 247C742.8 246.8 741.5 244.5 741 244" stroke-width="1.4" opacity="0.90"/>
<path d="M632 247.5C638.3 246.4 657.5 242.2 670 241C682.5 239.8 695.2 239.5 707 240C718.8 240.5 735.3 243.3 741 244" stroke-width="1.8" opacity="0.90"/>
<path d="M632 250C638.3 250.4 657.5 252.5 670 252.5C682.5 252.5 695.3 251.2 707 250C718.7 248.8 734.5 245.8 740 245" stroke-width="1.3" opacity="0.80"/>
<path d="M640 244C646.7 243 666.7 239 680 238C693.3 237 713.3 238 720 238" stroke-width="1.0" opacity="0.60"/>
<path d="M615 236C615.7 235.5 617.7 233 619 233C620.3 233 623 235 623 236C623 237 620.3 239 619 239C617.7 239 615.7 236.5 615 236" stroke-width="1.7" opacity="0.95"/>
<path d="M605 233C606.7 232.5 611.7 230 615 230C618.3 230 622.5 231.7 625 233C627.5 234.3 629.2 237.2 630 238" stroke-width="1.5" opacity="0.85"/>
<path d="M590 228C592.5 228.3 601.3 228 605 230C608.7 232 607.5 237 612 240C616.5 243 628.7 246.7 632 248" stroke-width="1.1" opacity="0.70"/>
<path d="M565 237L575 231L570 238L583 230L578 237L592 228L586 236L598 230" stroke-width="1.4" opacity="0.85"/>
<path d="M570 242L580 236L577 246L586 240" stroke-width="1.1" opacity="0.70"/>
<path d="M632 252C629.2 253.5 621.2 257.8 615 261C608.8 264.2 600.5 268 595 271C589.5 274 584.2 277.7 582 279" stroke-width="2.6" opacity="0.85"/>
<path d="M628 256C624.5 258.3 614.7 265.2 607 270C599.3 274.8 589.8 281.5 582 285C574.2 288.5 563.7 290 560 291" stroke-width="1.6" opacity="0.75"/>
<path d="M612 262C609.7 263 601.7 266.5 598 268C594.3 269.5 591.3 270.5 590 271" stroke-width="3.2" opacity="0.85"/>
<path d="M600 270C597.7 272 589.8 278.2 586 282C582.2 285.8 578.5 291.2 577 293" stroke-width="1.6" opacity="0.80"/>
<path d="M592 276C588.7 278 578 284.5 572 288C566 291.5 558.7 295.5 556 297" stroke-width="1.1" opacity="0.70"/>
<path d="M586 268C582.7 270 572.3 276.8 566 280C559.7 283.2 551 285.8 548 287" stroke-width="0.9" opacity="0.55"/>
<path d="M735 150C736.7 147.5 740 139.2 745 135C750 130.8 758.3 126.7 765 125C771.7 123.3 779.2 123.8 785 125C790.8 126.2 795.5 128.8 800 132C804.5 135.2 810 142 812 144" stroke-width="1.2" opacity="0.80"/>
<path d="M812 144C815 145.8 824.5 151.5 830 155C835.5 158.5 841.8 162.3 845 165C848.2 167.7 848.3 170 849 171" stroke-width="1.3" opacity="0.85"/>
<path d="M849 171C845.8 171 837.8 172.5 830 171C822.2 169.5 811.2 165.3 802 162C792.8 158.7 779.5 152.8 775 151" stroke-width="1.4" opacity="0.85"/>
<path d="M775 151C778.3 151.5 787.5 152.2 795 154C802.5 155.8 811.3 159.2 820 162C828.7 164.8 842.5 169.5 847 171" stroke-width="1.5" opacity="0.80"/>
<path d="M790 139C792.5 139.3 801 139.8 805 141C809 142.2 812.5 145.2 814 146" stroke-width="1.8" opacity="0.85"/>
<path d="M768 138C768.7 137.7 770.5 136 772 136C773.5 136 776.8 137.2 777 138C777.2 138.8 774.5 141 773 141C771.5 141 768.8 138.5 768 138" stroke-width="1.8" opacity="0.95"/>
<path d="M762 134C763.7 133.7 768.7 131.5 772 132C775.3 132.5 780.3 136.2 782 137" stroke-width="1.2" opacity="0.80"/>
<path d="M735 150C734.5 152.5 732.2 160.7 732 165C731.8 169.3 733.7 174.2 734 176" stroke-width="1.0" opacity="0.70"/>
<path d="M775 162C775.2 164.2 775.3 170.3 776 175C776.7 179.7 778.5 187.5 779 190" stroke-width="0.9" opacity="0.65"/>
<path d="M740 140C739.5 142.5 737.2 150 737 155C736.8 160 738.7 167.5 739 170" stroke-width="0.8" opacity="0.55"/>
<path d="M745 150L748 158L744 166L752 160L750 170L758 164L756 172L764 165" stroke-width="0.9" opacity="0.60"/>
<path d="M742 136C743.7 135 748 131.3 752 130C756 128.7 763.7 128.3 766 128" stroke-width="0.8" opacity="0.50"/>
<path d="M653.8 149.5L659.3 152.2" stroke-width="0.7" opacity="0.48"/>
<path d="M677.7 160.3L679.1 166.5" stroke-width="0.9" opacity="0.44"/>
<path d="M649.7 150.9L659.3 150.9" stroke-width="1.1" opacity="0.60"/>
<path d="M670.6 151.5L678.6 153.4" stroke-width="1.0" opacity="0.62"/>
<path d="M674.7 147.1L679.6 154" stroke-width="0.9" opacity="0.41"/>
<path d="M665 146L663.3 155.2" stroke-width="0.9" opacity="0.45"/>
<path d="M678.4 154.7L677.8 163.9" stroke-width="0.9" opacity="0.48"/>
<path d="M664.8 157.2L671.5 156.3" stroke-width="1.1" opacity="0.37"/>
<path d="M646.6 159.6L654.3 160.9" stroke-width="0.9" opacity="0.46"/>
<path d="M678.1 151L683.7 154" stroke-width="1.0" opacity="0.44"/>
<path d="M656.6 161.4L664.2 163.5" stroke-width="1.1" opacity="0.39"/>
<path d="M650.1 149.1L651.9 157.1" stroke-width="0.8" opacity="0.46"/>
<path d="M650.8 159L658.6 155.5" stroke-width="1.1" opacity="0.65"/>
<path d="M669.5 167.8L675.5 164.7" stroke-width="1.2" opacity="0.59"/>
<path d="M659.7 162.2L664.6 169.8" stroke-width="0.8" opacity="0.42"/>
<path d="M658.7 149.5L667.7 153.4" stroke-width="0.8" opacity="0.36"/>
<path d="M637.2 163.5L640.9 168.6" stroke-width="0.8" opacity="0.36"/>
<path d="M659.1 169.7L664 168.4" stroke-width="0.7" opacity="0.38"/>
<path d="M651.5 167.7L657 163.9" stroke-width="0.8" opacity="0.60"/>
<path d="M639 167.8L642.9 172.9" stroke-width="1.2" opacity="0.46"/>
<path d="M641.2 170.8L646.4 167" stroke-width="0.8" opacity="0.57"/>
<path d="M655.6 171.7L660.3 168.3" stroke-width="0.8" opacity="0.39"/>
<path d="M641.3 175.4L645.9 173.5" stroke-width="1.1" opacity="0.49"/>
<path d="M660.4 165.4L663.2 172.3" stroke-width="1.1" opacity="0.53"/>
<path d="M645.9 166.2L653.9 164.1" stroke-width="1.1" opacity="0.58"/>
<path d="M644 168.8L648.1 174.9" stroke-width="1.1" opacity="0.48"/>
<path d="M689.9 153.4L693.8 147.1" stroke-width="1.3" opacity="0.45"/>
<path d="M693.5 153.9L697.8 153.2" stroke-width="1.2" opacity="0.46"/>
<path d="M695.3 152.4L695.9 147.6" stroke-width="1.1" opacity="0.62"/>
<path d="M692 155L693.9 151.2" stroke-width="1.3" opacity="0.42"/>
<path d="M691.1 143L698 143.8" stroke-width="1.2" opacity="0.61"/>
<path d="M691.9 144.9L697.2 144" stroke-width="1.2" opacity="0.69"/>
<path d="M689.5 150.5L689.8 146.2" stroke-width="1.1" opacity="0.59"/>
<path d="M693.6 151.9L695.2 146.7" stroke-width="1.2" opacity="0.60"/>
<path d="M681.9 151.7L686.3 152.4" stroke-width="1.0" opacity="0.55"/>
<path d="M692.1 148.3L694.8 143.1" stroke-width="1.3" opacity="0.45"/>
<path d="M603.3 182.5L615.1 179.9" stroke-width="0.8" opacity="0.41"/>
<path d="M623 176.7L632.5 174.6" stroke-width="0.7" opacity="0.41"/>
<path d="M611.3 186.2L624.3 179.7" stroke-width="0.6" opacity="0.27"/>
<path d="M612.9 180.8L626.8 176" stroke-width="0.9" opacity="0.24"/>
<path d="M608.4 182.8L621 178.1" stroke-width="0.8" opacity="0.26"/>
<path d="M606.5 186.2L619.2 180.8" stroke-width="1.0" opacity="0.37"/>
<path d="M618.2 184.1L631.7 178.1" stroke-width="0.8" opacity="0.42"/>
<path d="M608.4 185.2L620.7 182.1" stroke-width="0.8" opacity="0.27"/>
<path d="M592.6 196.7L602.6 193.1" stroke-width="0.6" opacity="0.27"/>
<path d="M592.6 195.1L604.7 191.7" stroke-width="0.8" opacity="0.31"/>
<path d="M585.6 196.2L601.2 189.3" stroke-width="0.6" opacity="0.37"/>
<path d="M580.9 196.8L589.4 192" stroke-width="1.0" opacity="0.41"/>
<path d="M593.2 199.8L603.7 197.1" stroke-width="0.8" opacity="0.34"/>
<path d="M583.8 202.2L600.3 196.8" stroke-width="0.6" opacity="0.37"/>
<path d="M587.3 200.8L602.5 195.2" stroke-width="0.7" opacity="0.43"/>
<path d="M580 198.8L594.7 194.7" stroke-width="0.7" opacity="0.29"/>
<path d="M640 172C635.3 174.3 622.8 181.5 612 186C601.2 190.5 585.7 194.7 575 199C564.3 203.3 552.5 209.8 548 212" stroke-width="1.6" opacity="0.60"/>
<path d="M600 153C604.2 152.5 617.5 150.2 625 150C632.5 149.8 641.7 151.7 645 152" stroke-width="0.9" opacity="0.60"/>
<path d="M595.2 245.9L593.7 255.2" stroke-width="0.8" opacity="0.44"/>
<path d="M607.6 242.8L612.8 244.5" stroke-width="0.7" opacity="0.48"/>
<path d="M601.4 249.4L610.9 251.2" stroke-width="1.0" opacity="0.37"/>
<path d="M586.9 252.8L585.5 262.2" stroke-width="1.0" opacity="0.42"/>
<path d="M582.2 243.9L591.7 242.4" stroke-width="1.1" opacity="0.54"/>
<path d="M583.9 242.6L593.6 242.9" stroke-width="0.7" opacity="0.55"/>
<path d="M606 245.7L605.5 252.2" stroke-width="0.9" opacity="0.37"/>
<path d="M584.1 238.4L590.1 238.9" stroke-width="0.7" opacity="0.60"/>
<path d="M591 252.1L595.5 259.5" stroke-width="1.0" opacity="0.59"/>
<path d="M608.8 249.7L615.5 255" stroke-width="1.0" opacity="0.48"/>
<path d="M599.3 237.4L600.9 244.8" stroke-width="0.7" opacity="0.38"/>
<path d="M607.9 242L616.1 244.2" stroke-width="1.1" opacity="0.42"/>
<path d="M592.6 249.2L600.2 243.7" stroke-width="0.6" opacity="0.59"/>
<path d="M588 236.7L589.8 245.6" stroke-width="0.8" opacity="0.48"/>
<path d="M581.6 269.7L587.3 261.3" stroke-width="1.2" opacity="0.48"/>
<path d="M591.2 272.3L599.1 265.7" stroke-width="1.1" opacity="0.45"/>
<path d="M571.8 263.7L579.3 264.1" stroke-width="1.0" opacity="0.52"/>
<path d="M584 255.8L590.8 253.4" stroke-width="1.1" opacity="0.47"/>
<path d="M576.8 269.6L584 267" stroke-width="1.1" opacity="0.52"/>
<path d="M589.9 269.5L599 266.7" stroke-width="1.0" opacity="0.43"/>
<path d="M594.6 263.9L598.8 255.4" stroke-width="0.9" opacity="0.44"/>
<path d="M585.5 260.6L589.2 255.4" stroke-width="1.1" opacity="0.53"/>
<path d="M584.7 255.1L594.7 256.6" stroke-width="0.9" opacity="0.30"/>
<path d="M590.4 265L596.1 262.9" stroke-width="1.0" opacity="0.31"/>
<path d="M576 231.6L583 225.3" stroke-width="1.3" opacity="0.76"/>
<path d="M572.7 232.3L577.6 229.5" stroke-width="1.0" opacity="0.82"/>
<path d="M583.1 238.6L589.1 232.6" stroke-width="1.3" opacity="0.71"/>
<path d="M576.1 232.8L580.9 224.7" stroke-width="1.4" opacity="0.55"/>
<path d="M582.1 233.3L590.2 228.9" stroke-width="1.0" opacity="0.68"/>
<path d="M572.4 234.9L575.9 229.3" stroke-width="1.0" opacity="0.79"/>
<path d="M568.4 238.6L574 230.5" stroke-width="0.9" opacity="0.48"/>
<path d="M568.9 238.4L577.3 234.2" stroke-width="1.1" opacity="0.49"/>
<path d="M573.1 232.1L579.2 231" stroke-width="0.9" opacity="0.77"/>
<path d="M567.9 239.5L573.5 233.9" stroke-width="1.2" opacity="0.79"/>
<path d="M567.1 238.8L572.5 232.1" stroke-width="0.8" opacity="0.74"/>
<path d="M570.5 232L574.2 226.1" stroke-width="1.0" opacity="0.82"/>
<path d="M608.9 258L615.4 255.8" stroke-width="1.2" opacity="0.75"/>
<path d="M616 260.5L622 258.5" stroke-width="1.7" opacity="0.67"/>
<path d="M610.5 262.8L616.2 258.7" stroke-width="1.1" opacity="0.59"/>
<path d="M606.7 260.8L615.1 255.8" stroke-width="1.7" opacity="0.69"/>
<path d="M597.8 257.2L603.8 253.2" stroke-width="1.5" opacity="0.49"/>
<path d="M608.4 259.2L616.6 254.3" stroke-width="1.8" opacity="0.49"/>
<path d="M604.4 263.6L609.5 260.1" stroke-width="1.1" opacity="0.71"/>
<path d="M611.9 263L617.4 260" stroke-width="1.2" opacity="0.67"/>
<path d="M612 232C613.2 231.7 616.7 229.8 619 230C621.3 230.2 624.5 231.7 626 233C627.5 234.3 629 236.7 628 238C627 239.3 622.7 241 620 241C617.3 241 613.3 239.5 612 238C610.7 236.5 612 233 612 232" stroke-width="1.2" opacity="0.80"/>
<path d="M650 217C652 218.5 658.3 223.8 662 226C665.7 228.2 670.3 229.3 672 230" stroke-width="1.0" opacity="0.60"/>
<path d="M662 232C668.3 231.7 687.8 229.2 700 230C712.2 230.8 729.2 235.8 735 237" stroke-width="0.8" opacity="0.50"/>
<path d="M747.6 149.5L751.3 156" stroke-width="0.7" opacity="0.41"/>
<path d="M743.5 146.3L743.1 154.9" stroke-width="0.8" opacity="0.33"/>
<path d="M747.9 157.5L746.3 164.9" stroke-width="1.0" opacity="0.43"/>
<path d="M743.5 158.3L745.2 166.3" stroke-width="0.9" opacity="0.31"/>
<path d="M748.4 164.2L752.6 167.8" stroke-width="0.6" opacity="0.37"/>
<path d="M749.9 153.2L750.9 159.3" stroke-width="0.7" opacity="0.47"/>
<path d="M753.9 166L752.2 172.3" stroke-width="0.7" opacity="0.43"/>
<path d="M753.6 154.2L752.6 160.4" stroke-width="0.8" opacity="0.33"/>
<path d="M762.2 159.1L760.2 164.8" stroke-width="0.9" opacity="0.45"/>
<path d="M741.7 163.6L740.7 169.2" stroke-width="1.0" opacity="0.50"/>
<path d="M752.7 158.7L756.3 163.1" stroke-width="0.8" opacity="0.52"/>
<path d="M742.4 156.1L747.6 162.8" stroke-width="1.0" opacity="0.52"/>
<path d="M743.5 156.4L750.3 160.3" stroke-width="1.0" opacity="0.51"/>
<path d="M738.8 156.5L744.7 160.8" stroke-width="1.0" opacity="0.37"/>
<path d="M769.7 167.8L771.4 173.1" stroke-width="1.0" opacity="0.48"/>
<path d="M770 159.6L775.9 158.6" stroke-width="0.8" opacity="0.37"/>
<path d="M756.5 163.6L760.5 169.7" stroke-width="0.8" opacity="0.39"/>
<path d="M765.8 158.3L770.3 161.3" stroke-width="0.6" opacity="0.44"/>
<path d="M758.8 162L765.6 164.2" stroke-width="0.6" opacity="0.41"/>
<path d="M754.2 170.1L762 170.9" stroke-width="0.8" opacity="0.37"/>
<path d="M760.5 160.2L763.3 166.5" stroke-width="0.8" opacity="0.33"/>
<path d="M764.1 158.8L769.9 163.3" stroke-width="0.8" opacity="0.40"/>
<path d="M739.2 143.2L746.2 137" stroke-width="0.8" opacity="0.48"/>
<path d="M740.1 145.8L742.9 138.8" stroke-width="0.6" opacity="0.34"/>
<path d="M737.6 148.4L740.5 141.1" stroke-width="0.8" opacity="0.34"/>
<path d="M743.6 154.4L747.6 145.1" stroke-width="0.6" opacity="0.29"/>
<path d="M746 142.6L747.9 132.4" stroke-width="0.5" opacity="0.42"/>
<path d="M740.7 145.7L744.4 135.5" stroke-width="0.7" opacity="0.32"/>
<path d="M740.2 151.7L742.6 145.7" stroke-width="0.8" opacity="0.29"/>
<path d="M734.4 139.7L740.7 134.4" stroke-width="0.8" opacity="0.40"/>
<path d="M780 128C782.5 128.5 790.7 129.2 795 131C799.3 132.8 804.2 137.7 806 139" stroke-width="0.9" opacity="0.55"/>
<path d="M776 148C780 149.7 791 154.7 800 158C809 161.3 825 166.3 830 168" stroke-width="0.9" opacity="0.50"/>
<path d="M787.5 262.5C788.8 260.6 791.7 255.2 795 251.2C798.3 247.3 802.5 242.9 807.5 238.8C812.5 234.6 817.9 230.2 825 226.2C832.1 222.3 841.7 217.8 850 215C858.3 212.2 866.7 210.5 875 209.5C883.3 208.5 891.7 208.3 900 208.8C908.3 209.2 917.5 210.5 925 212C932.5 213.5 939.6 215.3 945 217.5C950.4 219.7 955 223.1 957.5 225C960 226.9 959.6 228.1 960 228.8" stroke-width="1.3" opacity="0.85"/>
<path d="M797.5 250.5C799.6 248.5 805 242.6 810 238.8C815 234.9 820.4 231.1 827.5 227.5C834.6 223.9 844.4 219.7 852.5 217C860.6 214.3 872.3 212.4 876.2 211.5" stroke-width="0.8" opacity="0.50"/>
<path d="M960 228.8C957.9 229.6 951.7 232.1 947.5 233.8C943.3 235.4 937.9 236.9 935 238.8C932.1 240.6 930.8 244 930 245" stroke-width="1.3" opacity="0.85"/>
<path d="M930 245C932.1 245.5 938.3 247.1 942.5 248C946.7 248.9 953.8 249.1 955 250.5C956.2 251.9 953.3 254.5 950 256.2C946.7 258 941.7 259.8 935 261.2C928.3 262.7 920 263.9 910 265C900 266.1 885.8 267.2 875 268C864.2 268.8 853.8 269.4 845 269.5C836.2 269.6 826.2 268.9 822.5 268.8" stroke-width="1.6" opacity="0.85"/>
<path d="M887.5 245C891.2 244 902.1 240.8 910 238.8C917.9 236.7 926.9 234.3 935 232.5C943.1 230.7 954.8 228.8 958.8 228" stroke-width="1.1" opacity="0.75"/>
<path d="M887.5 245C891.2 245.4 902.9 247.4 910 247.5C917.1 247.6 926.7 246 930 245.8" stroke-width="1.4" opacity="0.80"/>
<path d="M890 246.2C893.8 245.5 905.4 243.2 912.5 242C919.6 240.8 929.2 239.3 932.5 238.8" stroke-width="0.8" opacity="0.50"/>
<path d="M840 250C843.8 249.5 854.6 247.8 862.5 247C870.4 246.2 883.3 245.3 887.5 245" stroke-width="1.0" opacity="0.70"/>
<path d="M822.5 260C827.1 259.2 839.2 256.5 850 255C860.8 253.5 875 252 887.5 251.2C900 250.5 915.8 250.9 925 250.5C934.2 250.1 939.6 249 942.5 248.8" stroke-width="1.0" opacity="0.65"/>
<path d="M825 264.5C830 264 844.2 262.2 855 261.2C865.8 260.3 878.3 259.4 890 258.8C901.7 258.1 915.4 258.2 925 257.5C934.6 256.8 943.8 255 947.5 254.5" stroke-width="0.8" opacity="0.50"/>
<path d="M875 209.5C876 211.2 879.4 216.2 881.2 220C883.1 223.8 885.2 228.3 886.2 232.5C887.3 236.7 887.3 242.9 887.5 245" stroke-width="1.0" opacity="0.70"/>
<path d="M787.5 262.5L783.8 271.2" stroke-width="1.2" opacity="0.80"/>
<path d="M822.5 268.8C821 269.6 815.6 271.7 813.8 273.8C811.9 275.8 811.7 280 811.2 281.2" stroke-width="1.2" opacity="0.80"/>
<path d="M783.2 272C785.3 273.2 790.8 278.5 795.5 279C800.2 279.5 809 275.7 811.8 275" stroke-width="1.6" opacity="0.80"/>
<path d="M782 281.2C784.1 282.4 789.6 287.8 794.4 288.2C799.2 288.8 808 284.9 810.8 284.2" stroke-width="1.6" opacity="0.80"/>
<path d="M782.5 289.5C784.4 290.6 789.5 295.5 794 296C798.5 296.5 806.9 293.1 809.5 292.5" stroke-width="1.6" opacity="0.80"/>
<path d="M783.8 297C785.4 297.9 789.5 302 793.4 302.5C797.2 303 804.7 300.4 807 300" stroke-width="1.6" opacity="0.80"/>
<path d="M785 302.5C784.4 305 782.1 312.1 781.2 317.5C780.4 322.9 779.6 329.6 780 335C780.4 340.4 782.1 345.2 783.8 350C785.4 354.8 789 361.7 790 364" stroke-width="1.1" opacity="0.75"/>
<path d="M806.2 301.2C807.7 303.5 812.5 309.8 815 315C817.5 320.2 819.8 326.7 821.2 332.5C822.7 338.3 823.5 344.8 823.8 350C824 355.2 822.7 361.7 822.5 364" stroke-width="1.2" opacity="0.80"/>
<path d="M787.5 364L793 372" stroke-width="1.0" opacity="0.70"/>
<path d="M822.5 364C821.9 366.3 820.1 374.3 819 378C817.9 381.7 816.5 384.7 816 386" stroke-width="1.1" opacity="0.75"/>
<path d="M813 385C810.8 380.8 803.7 367 800 360C796.3 353 793.3 352.2 791 343C788.7 333.8 786.8 311.3 786 305" stroke-width="0.8" opacity="0.50"/>
<path d="M782 317.5C785 317 794.4 314.6 800 314.5C805.6 314.4 812.9 316.6 815.5 317" stroke-width="0.8" opacity="0.50"/>
<path d="M780.5 335C783.8 334.5 793.2 332.1 800 332C806.8 331.9 817.9 334.1 821.5 334.5" stroke-width="0.8" opacity="0.50"/>
<path d="M779.5 332.5C779.2 333.8 776.7 335.4 778 340C779.3 344.6 785.5 357.1 787.5 360C789.5 362.9 791 361.7 790 357.5C789 353.3 782.7 338.8 781.2 335" stroke-width="1.3" opacity="0.65"/>
<path d="M850 241.2C850.8 240.4 853.1 237.3 855 236.2C856.9 235.2 860.4 234.6 861.2 235C862.1 235.4 859 239 860 238.8C861 238.5 865.4 234.8 867.5 233.8C869.6 232.7 871.5 232.1 872.5 232.5C873.5 232.9 873.5 235.6 873.8 236.2" stroke-width="0.9" opacity="0.80"/>
<path d="M880 235L881 235.8" stroke-width="1.4" opacity="0.80"/>
<path d="M830 267.5L833.5 263" stroke-width="0.8" opacity="0.45"/>
<path d="M835.2 267.2L838.8 262.6" stroke-width="0.8" opacity="0.45"/>
<path d="M840.5 266.9L844 262.3" stroke-width="0.8" opacity="0.45"/>
<path d="M845.8 266.6L849.2 261.9" stroke-width="0.8" opacity="0.45"/>
<path d="M851 266.3L854.5 261.6" stroke-width="0.8" opacity="0.45"/>
<path d="M856.2 266L859.8 261.2" stroke-width="0.8" opacity="0.45"/>
<path d="M861.5 265.7L865 260.9" stroke-width="0.8" opacity="0.45"/>
<path d="M866.8 265.4L870.2 260.6" stroke-width="0.8" opacity="0.45"/>
<path d="M872 265.1L875.5 260.2" stroke-width="0.8" opacity="0.45"/>
<path d="M877.2 264.8L880.8 259.9" stroke-width="0.8" opacity="0.45"/>
<path d="M882.5 264.5L886 259.5" stroke-width="0.8" opacity="0.45"/>
<path d="M887.8 264.2L891.2 259.1" stroke-width="0.8" opacity="0.45"/>
<path d="M893 263.9L896.5 258.8" stroke-width="0.8" opacity="0.45"/>
<path d="M898.2 263.6L901.8 258.4" stroke-width="0.8" opacity="0.45"/>
<path d="M903.5 263.3L907 258.1" stroke-width="0.8" opacity="0.45"/>
<path d="M908.8 263L912.2 257.8" stroke-width="0.8" opacity="0.45"/>
<path d="M914 262.7L917.5 257.4" stroke-width="0.8" opacity="0.45"/>
<path d="M919.2 262.4L922.8 257.1" stroke-width="0.8" opacity="0.45"/>
<path d="M924.5 262.1L928 256.7" stroke-width="0.8" opacity="0.45"/>
<path d="M929.8 261.8L933.2 256.4" stroke-width="0.8" opacity="0.45"/>
<path d="M935 261.5L938.5 256" stroke-width="0.8" opacity="0.45"/>
<path d="M940.2 261.2L943.8 255.7" stroke-width="0.8" opacity="0.45"/>
<path d="M815.5 236.5C817.4 236.2 823 235.5 826.8 234.8C830.5 234 836.1 232.5 838 232" stroke-width="2.4" opacity="0.80"/>
<path d="M810 240.8C812.5 240.5 819.8 239.8 824.8 239C829.7 238.2 837 236.7 839.5 236.2" stroke-width="2.4" opacity="0.80"/>
<path d="M805.5 245C808.2 244.7 816.3 244 821.8 243.2C827.2 242.5 835.3 241 838 240.5" stroke-width="2.4" opacity="0.80"/>
<path d="M802.5 249.2C805.2 249 813.3 248.2 818.8 247.5C824.2 246.8 832.3 245.2 835 244.8" stroke-width="2.4" opacity="0.80"/>
<path d="M801.2 253.5C803.7 253.2 811 252.5 815.9 251.8C820.8 251 828.1 249.5 830.5 249" stroke-width="2.4" opacity="0.80"/>
<path d="M803.8 257.8C805.5 257.5 810.8 256.8 814.4 256C817.9 255.2 823.2 253.7 825 253.2" stroke-width="2.4" opacity="0.80"/>
<path d="M813.8 232.5C815.6 232.3 821 231.2 825 231.2C829 231.3 834.9 231.8 837.5 233C840.1 234.2 840.9 235.9 840.5 238.8C840.1 241.6 838 246.8 835 250C832 253.2 826.7 256.4 822.5 258C818.3 259.6 813.3 260.2 810 259.5C806.7 258.8 804 256.2 802.5 253.8C801 251.3 800.6 247.7 801.2 245C801.9 242.3 804.2 239.6 806.2 237.5C808.3 235.4 812.5 233.3 813.8 232.5" stroke-width="1.0" opacity="0.80"/>
<path d="M825 231.8C824 234 820.1 240.5 818.8 245C817.4 249.5 817.3 256.5 817 258.8" stroke-width="1.3" opacity="0.85"/>
<path d="M538.7 358.7C539.8 356.8 541.9 351.3 545 347.5C548.1 343.7 552.5 339.6 557.5 336C562.5 332.4 568.8 328.5 575 326C581.2 323.5 588.8 322.1 595 321C601.2 319.9 609.6 319.8 612.5 319.5" stroke-width="1.0" opacity="0.70"/>
<path d="M538.7 358.7C539.3 359.3 540.6 362.7 542.5 362.5C544.4 362.3 545.4 360.8 550 357.5C554.6 354.2 566.7 345 570 342.5" stroke-width="0.9" opacity="0.60"/>
<path d="M571 336C570.2 337.3 567.8 341.2 566 344C564.2 346.8 562.2 349.7 560 352.5C557.8 355.3 554.2 358.8 552.5 361C550.8 363.2 550 365.2 549.5 366" stroke-width="1.4" opacity="0.90"/>
<path d="M549.5 366C550.2 366.7 552 369.2 553.7 370C555.5 370.8 559 370.4 560 370.5" stroke-width="1.3" opacity="0.90"/>
<path d="M557.5 367.5C558.3 367.1 561.1 364.8 562.5 365C563.9 365.2 565.4 368.1 566 368.7" stroke-width="1.1" opacity="0.80"/>
<path d="M555 373.7C554.6 374.8 552.1 378.3 552.5 380C552.9 381.7 556.7 383.1 557.5 383.7" stroke-width="1.2" opacity="0.85"/>
<path d="M557.5 383.7C557.1 384.3 555 386.3 555 387.5C555 388.7 556 390.2 557.5 391C559 391.8 562.7 392.2 563.7 392.5" stroke-width="1.2" opacity="0.85"/>
<path d="M557.5 387.5L567.5 386" stroke-width="1.1" opacity="0.80"/>
<path d="M557.5 395C558.1 396.2 560.8 399.8 561 402.5C561.2 405.2 558.2 408.8 558.7 411C559.2 413.2 561 414.7 563.7 416C566.4 417.3 573.1 418.2 575 418.7" stroke-width="1.5" opacity="0.90"/>
<path d="M575 418.7C577.9 418.1 587.1 416.4 592.5 415C597.9 413.6 602.9 412.1 607.5 410C612.1 407.9 617.9 403.8 620 402.5" stroke-width="1.1" opacity="0.70"/>
<path d="M566 417C570 416.3 582.7 415.3 590 413C597.3 410.7 606.7 404.7 610 403" stroke-width="0.8" opacity="0.45"/>
<path d="M605 412.5C607.5 414.6 615.4 420.8 620 425C624.6 429.2 629.4 434.2 632.5 437.5C635.6 440.8 637.7 443.8 638.7 445" stroke-width="1.2" opacity="0.80"/>
<path d="M571 336C572.1 337.5 575 343.5 577.5 345C580 346.5 583.5 345.7 586 345C588.5 344.3 591.4 341.7 592.5 341" stroke-width="1.5" opacity="0.90"/>
<path d="M578.7 345.5L587.5 347.5" stroke-width="1.2" opacity="0.80"/>
<path d="M573.7 333.7C575.2 333.5 579.4 331.9 582.5 332.5C585.6 333.1 590.8 336.7 592.5 337.5" stroke-width="1.0" opacity="0.70"/>
<path d="M611 346C612.5 348.8 617.2 357.2 620 362.5C622.8 367.8 624.6 374 627.5 377.5C630.4 381 633.8 384.5 637.5 383.7C641.2 382.9 646.9 376.9 650 372.5C653.1 368.1 655 360 656 357.5" stroke-width="1.2" opacity="0.80"/>
<path d="M630 368.7C630.6 367.7 632 363.8 633.7 362.5C635.4 361.2 638.1 360.4 640 361C641.9 361.6 645 363.9 645 366C645 368.1 640.8 372.4 640 373.7" stroke-width="1.2" opacity="0.85"/>
<path d="M626 380C626.8 380.8 629 384.5 631 385C633 385.5 636.8 383.3 638 383" stroke-width="0.9" opacity="0.60"/>
<path d="M592.5 330C597.1 331.2 610.4 336.5 620 337C629.6 337.5 640.8 335 650 333C659.2 331 670.8 326.3 675 325" stroke-width="2.0" opacity="0.85"/>
<path d="M597 333C601.7 334.3 615.3 340.2 625 341C634.7 341.8 647.2 339.7 655 338C662.8 336.3 669.2 332.2 672 331" stroke-width="1.2" opacity="0.70"/>
<path d="M607.5 342.5C613.8 342.9 632.5 345.4 645 345C657.5 344.6 676.2 340.8 682.5 340" stroke-width="1.7" opacity="0.80"/>
<path d="M612 347C617.5 347.7 634 351 645 351C656 351 672.5 347.7 678 347" stroke-width="1.0" opacity="0.60"/>
<path d="M615 350C620.8 351.2 639.2 355.3 650 357C660.8 358.7 675 359.5 680 360" stroke-width="1.3" opacity="0.75"/>
<path d="M625 357C629.5 358.2 643.5 362.2 652 364C660.5 365.8 672 367.3 676 368" stroke-width="1.0" opacity="0.60"/>
<path d="M660 365C662.1 367.5 671.3 376.5 672.5 380C673.7 383.5 665.8 382.7 667 386C668.2 389.3 679.5 396.7 680 400C680.5 403.3 669.7 402.7 670 406C670.3 409.3 681.3 416.3 682 420C682.7 423.7 673.5 424.7 674 428C674.5 431.3 683.2 438 685 440" stroke-width="1.2" opacity="0.75"/>
<path d="M652 370C654 373 662.5 383.8 664 388C665.5 392.2 659.3 391.3 661 395C662.7 398.7 672.8 406.2 674 410C675.2 413.8 667.3 414.3 668 418C668.7 421.7 676.3 429.7 678 432" stroke-width="1.0" opacity="0.60"/>
<path d="M672.9 382.3L682.5 393.9" stroke-width="0.6" opacity="0.43"/>
<path d="M670.2 391.2L680.1 405.2" stroke-width="0.9" opacity="0.53"/>
<path d="M667.2 372.4L674.2 381.2" stroke-width="0.6" opacity="0.41"/>
<path d="M663.9 386.2L671.2 400" stroke-width="1.1" opacity="0.42"/>
<path d="M668.8 405.5L679.3 418.8" stroke-width="0.7" opacity="0.58"/>
<path d="M673.3 409.2L679.8 423" stroke-width="0.9" opacity="0.53"/>
<path d="M672.1 391.1L681 405.6" stroke-width="0.8" opacity="0.42"/>
<path d="M662.6 405.2L670.3 418" stroke-width="0.8" opacity="0.38"/>
<path d="M667.6 406.6L675.9 416.6" stroke-width="0.9" opacity="0.56"/>
<path d="M661.7 406.2L673.3 416" stroke-width="1.0" opacity="0.46"/>
<path d="M661.2 434.5L668.5 440.3" stroke-width="0.7" opacity="0.48"/>
<path d="M661.1 436L661.4 447.8" stroke-width="0.9" opacity="0.54"/>
<path d="M665.3 438.9L671.8 446.9" stroke-width="0.9" opacity="0.50"/>
<path d="M666.5 438.8L669.5 447" stroke-width="0.9" opacity="0.35"/>
<path d="M657.4 432.8L668.5 439.4" stroke-width="1.0" opacity="0.38"/>
<path d="M649.9 439.9L651.9 447.8" stroke-width="1.0" opacity="0.51"/>
<path d="M658.3 435.2L664.7 439.4" stroke-width="0.8" opacity="0.48"/>
<path d="M662 433L663.6 440.4" stroke-width="0.9" opacity="0.34"/>
<path d="M668 352C670 354.2 676.8 360.3 680 365C683.2 369.7 685.8 377.5 687 380" stroke-width="1.0" opacity="0.60"/>
<path d="M560 388.6L568.3 354.1" stroke-width="0.5" opacity="0.29"/>
<path d="M569.3 399.3L578.3 352.5" stroke-width="0.9" opacity="0.27"/>
<path d="M579.8 386.5L583.8 354.3" stroke-width="0.9" opacity="0.27"/>
<path d="M581.3 396.9L586.5 362.1" stroke-width="0.6" opacity="0.30"/>
<path d="M569.2 392.1L580.5 347.6" stroke-width="0.9" opacity="0.36"/>
<path d="M579.9 398.8L588.7 359" stroke-width="0.8" opacity="0.37"/>
<path d="M564.8 391.3L569.2 350.1" stroke-width="0.9" opacity="0.30"/>
<path d="M584.6 391.2L591.3 355.6" stroke-width="0.8" opacity="0.26"/>
<path d="M559.3 399.3L569.1 348.2" stroke-width="0.6" opacity="0.37"/>
<path d="M580.6 396.9L592.9 344.9" stroke-width="0.9" opacity="0.33"/>
<path d="M570.3 397.7L579.6 353.3" stroke-width="0.6" opacity="0.36"/>
<path d="M577 385.7L581.3 354" stroke-width="0.7" opacity="0.23"/>
<path d="M581.5 363L615.7 353.9" stroke-width="0.6" opacity="0.30"/>
<path d="M589.1 360.8L610.2 355.8" stroke-width="0.7" opacity="0.27"/>
<path d="M577.8 365.2L604.7 358.5" stroke-width="0.8" opacity="0.21"/>
<path d="M591.5 377L623.5 361.9" stroke-width="0.6" opacity="0.18"/>
<path d="M577.6 371.1L606.8 360.2" stroke-width="0.5" opacity="0.21"/>
<path d="M581 366L609.6 358.4" stroke-width="0.6" opacity="0.32"/>
<path d="M587.2 370L616.4 362.1" stroke-width="0.6" opacity="0.20"/>
<path d="M582.6 370.5L619.7 361.5" stroke-width="0.7" opacity="0.25"/>
<path d="M563.1 358.1L568.5 345.3" stroke-width="0.8" opacity="0.45"/>
<path d="M558.8 361L563.1 349.1" stroke-width="0.6" opacity="0.38"/>
<path d="M561.5 360.5L566 347.9" stroke-width="0.9" opacity="0.38"/>
<path d="M559.3 358.9L564 350.1" stroke-width="0.9" opacity="0.31"/>
<path d="M562.9 356.8L567.8 348.3" stroke-width="0.8" opacity="0.36"/>
<path d="M617.7 432.2L633.8 434.3" stroke-width="1.1" opacity="0.61"/>
<path d="M603.2 425.3L625.6 431" stroke-width="0.9" opacity="0.50"/>
<path d="M605.9 430.5L628.5 441.2" stroke-width="1.3" opacity="0.62"/>
<path d="M601.5 432L626.8 435" stroke-width="0.8" opacity="0.68"/>
<path d="M606.3 432L630.5 434.5" stroke-width="1.2" opacity="0.46"/>
<path d="M610.3 421.4L636 433.3" stroke-width="0.7" opacity="0.60"/>
<path d="M611.1 431.8L624.9 439.8" stroke-width="0.8" opacity="0.60"/>
<path d="M613.5 428.9L639.5 438.1" stroke-width="1.2" opacity="0.78"/>
<path d="M610.4 421.9L633.1 432.3" stroke-width="1.3" opacity="0.51"/>
<path d="M594.5 426.1L614.7 430.1" stroke-width="0.7" opacity="0.68"/>
<path d="M604.5 425.8L627.4 428.6" stroke-width="0.8" opacity="0.77"/>
<path d="M601.5 433.4L622 436.1" stroke-width="1.2" opacity="0.65"/>
<path d="M576.5 445.3L601 446.4" stroke-width="1.0" opacity="0.52"/>
<path d="M576.9 437.1L595.9 442.5" stroke-width="1.0" opacity="0.65"/>
<path d="M587.5 442.8L609.8 445.2" stroke-width="1.1" opacity="0.74"/>
<path d="M578.6 439.3L596 445.3" stroke-width="0.9" opacity="0.64"/>
<path d="M578.5 444.3L595.4 446.6" stroke-width="1.1" opacity="0.63"/>
<path d="M592 444.7L611.5 448.1" stroke-width="1.1" opacity="0.60"/>
<path d="M580.5 436.3L603.7 445.7" stroke-width="1.2" opacity="0.68"/>
<path d="M591.6 436.1L607 443" stroke-width="0.8" opacity="0.59"/>
<path d="M574 437.5L589.6 441.6" stroke-width="0.9" opacity="0.55"/>
<path d="M590.9 435.7L610.4 439.9" stroke-width="0.8" opacity="0.54"/>
<path d="M567.9 450.9L590.5 460.6" stroke-width="1.1" opacity="0.66"/>
<path d="M573.4 454.8L598.7 460.7" stroke-width="1.0" opacity="0.82"/>
<path d="M560.4 454.9L585 462.5" stroke-width="1.3" opacity="0.74"/>
<path d="M570.2 460.8L599.8 469" stroke-width="1.1" opacity="0.73"/>
<path d="M560.8 447.6L584.5 453.4" stroke-width="0.9" opacity="0.80"/>
<path d="M562.1 453.7L584.6 467.5" stroke-width="1.4" opacity="0.81"/>
<path d="M583.3 446.7L602.7 454.6" stroke-width="1.1" opacity="0.77"/>
<path d="M580.8 451.1L598.1 455.4" stroke-width="1.3" opacity="0.81"/>
<path d="M556.7 448.7L586.5 455.7" stroke-width="0.8" opacity="0.71"/>
<path d="M583.9 447.9L603.2 457.5" stroke-width="1.2" opacity="0.67"/>
<path d="M559 458.6L587.3 470.1" stroke-width="1.2" opacity="0.86"/>
<path d="M572.2 448.2L602.4 453.6" stroke-width="1.2" opacity="0.80"/>
<path d="M580.9 449.9L604 461.6" stroke-width="0.8" opacity="0.70"/>
<path d="M587.3 454.6L602.8 463.2" stroke-width="1.0" opacity="0.68"/>
<path d="M567.3 469.4L584.9 477.5" stroke-width="1.0" opacity="0.66"/>
<path d="M565.9 465.1L587.3 472.8" stroke-width="0.9" opacity="0.67"/>
<path d="M562 472.1L578.9 477.7" stroke-width="0.9" opacity="0.73"/>
<path d="M569.5 464.2L589.7 471.1" stroke-width="1.0" opacity="0.48"/>
<path d="M557.7 466.9L577 477.5" stroke-width="0.7" opacity="0.59"/>
<path d="M560.4 468.2L575.4 473.2" stroke-width="1.0" opacity="0.48"/>
<path d="M570.7 463.1L591 470.2" stroke-width="0.9" opacity="0.52"/>
<path d="M571.1 464.5L590.3 476.7" stroke-width="1.3" opacity="0.45"/>
<path d="M609 457.3L635 450.8" stroke-width="0.8" opacity="0.59"/>
<path d="M600.1 454.9L625.8 452.9" stroke-width="0.9" opacity="0.58"/>
<path d="M610.7 454.7L628 449.5" stroke-width="0.9" opacity="0.53"/>
<path d="M602.4 457.2L630.4 452.3" stroke-width="0.9" opacity="0.55"/>
<path d="M609.4 466.1L625.7 459.7" stroke-width="1.0" opacity="0.48"/>
<path d="M613.9 460L637.6 454.9" stroke-width="0.8" opacity="0.49"/>
<path d="M617.8 451.3L644.2 451" stroke-width="1.2" opacity="0.35"/>
<path d="M612.6 451.5L633.3 445" stroke-width="1.1" opacity="0.36"/>
<path d="M620.6 460.7L645.9 463" stroke-width="0.7" opacity="0.53"/>
<path d="M617.1 450.4L637 450.5" stroke-width="1.1" opacity="0.57"/>
<path d="M613.3 447.6L630.9 447.8" stroke-width="0.7" opacity="0.57"/>
<path d="M605.4 452.6L629.9 447.8" stroke-width="0.7" opacity="0.42"/>
<path d="M635.9 438.1L646.7 428.1" stroke-width="1.0" opacity="0.63"/>
<path d="M636.5 438.2L644.8 428.8" stroke-width="1.2" opacity="0.43"/>
<path d="M653.3 446.9L665.1 434.5" stroke-width="0.9" opacity="0.46"/>
<path d="M643 445.4L654.4 436.2" stroke-width="1.1" opacity="0.56"/>
<path d="M650.1 435.4L661 426.7" stroke-width="0.8" opacity="0.40"/>
<path d="M648.8 438.7L655.4 426.4" stroke-width="0.7" opacity="0.43"/>
<path d="M637 438.2L646 431" stroke-width="0.8" opacity="0.40"/>
<path d="M649.5 448.5L654.8 433.2" stroke-width="0.6" opacity="0.40"/>
<path d="M640 449.1L643.8 434.1" stroke-width="0.7" opacity="0.45"/>
<path d="M637.9 449.5L646.1 434.5" stroke-width="1.0" opacity="0.53"/>
<path d="M643.8 444.7L654.7 431.3" stroke-width="0.7" opacity="0.41"/>
<path d="M655.5 445L664.4 435" stroke-width="0.6" opacity="0.43"/>
<path d="M673.1 433.7L678.1 423" stroke-width="0.6" opacity="0.31"/>
<path d="M666.1 441.4L667.5 429.5" stroke-width="0.8" opacity="0.49"/>
<path d="M664.4 436.3L671.5 425.3" stroke-width="0.8" opacity="0.46"/>
<path d="M673.8 442.3L677.1 433.8" stroke-width="0.6" opacity="0.47"/>
<path d="M671.7 435.4L676.6 426.8" stroke-width="0.7" opacity="0.40"/>
<path d="M674.3 443.9L675.7 435" stroke-width="0.7" opacity="0.52"/>
<path d="M676.7 430.7L679.1 419.2" stroke-width="1.0" opacity="0.44"/>
<path d="M667.3 445.8L675 433.3" stroke-width="0.9" opacity="0.55"/>
<path d="M671.9 442.7L676.5 430.3" stroke-width="1.0" opacity="0.54"/>
<path d="M632.9 493L651.9 484" stroke-width="1.0" opacity="0.75"/>
<path d="M628.4 494L644.2 487.9" stroke-width="1.1" opacity="0.54"/>
<path d="M634.4 494L654 483.5" stroke-width="1.4" opacity="0.60"/>
<path d="M626 488L648.8 476.5" stroke-width="0.9" opacity="0.66"/>
<path d="M630.1 499.8L651.6 490" stroke-width="1.4" opacity="0.70"/>
<path d="M630.7 492.8L652.5 478.2" stroke-width="0.8" opacity="0.67"/>
<path d="M616.2 495.3L636.9 487.1" stroke-width="1.1" opacity="0.52"/>
<path d="M636.7 488.2L653.3 484.1" stroke-width="0.8" opacity="0.48"/>
<path d="M618 501L636.6 488.5" stroke-width="1.3" opacity="0.53"/>
<path d="M617.2 486L636 472.5" stroke-width="1.1" opacity="0.50"/>
<path d="M624.8 488.3L642.4 481.8" stroke-width="0.9" opacity="0.73"/>
<path d="M626.7 495.7L647 484.6" stroke-width="1.0" opacity="0.66"/>
<path d="M632.8 490.2L655 479.3" stroke-width="1.1" opacity="0.55"/>
<path d="M607.5 497L631.7 485.8" stroke-width="1.0" opacity="0.73"/>
<path d="M632.3 482.2L647.7 477.1" stroke-width="1.2" opacity="0.69"/>
<path d="M629.9 485.1L645.6 476.5" stroke-width="1.4" opacity="0.63"/>
<path d="M626.9 491L651.8 478.6" stroke-width="1.4" opacity="0.68"/>
<path d="M627.3 497.6L644.5 488" stroke-width="1.3" opacity="0.66"/>
<path d="M640.7 498.2L652.7 490.1" stroke-width="2.0" opacity="0.88"/>
<path d="M636.6 493.6L650.3 486.8" stroke-width="1.4" opacity="0.76"/>
<path d="M633.7 502.1L651.7 487.1" stroke-width="1.5" opacity="0.72"/>
<path d="M626.3 497L646.4 484.5" stroke-width="1.4" opacity="0.56"/>
<path d="M640.1 501.2L656.1 491.2" stroke-width="2.1" opacity="0.71"/>
<path d="M635.8 496.1L648.9 486.5" stroke-width="1.6" opacity="0.54"/>
<path d="M635.9 498L649 491.6" stroke-width="1.6" opacity="0.88"/>
<path d="M640.4 496.9L658.3 483.4" stroke-width="1.5" opacity="0.79"/>
<path d="M615 505L622 512L620 505L630 518L628 510L638 524L636 516L645 527" stroke-width="0.9" opacity="0.60"/>
<path d="M561 579C562.5 576.2 565.2 567.2 570 562C574.8 556.8 583 550.9 590 548C597 545.1 605.8 543.8 612 544.5C618.2 545.2 624 549.1 627 552C630 554.9 631.2 558.7 630 562C628.8 565.3 625 569.1 620 572C615 574.9 607.2 577.7 600 579.5C592.8 581.3 583.5 582.9 577 583C570.5 583.1 563.7 580.5 561 580" stroke-width="1.3" opacity="0.80"/>
<path d="M565 574C567.2 571.3 572.7 562.2 578 558C583.3 553.8 590.8 550.7 597 549C603.2 547.3 610.3 547 615 548C619.7 549 623.3 553.8 625 555" stroke-width="0.9" opacity="0.60"/>
<path d="M582 572C585.3 570.3 595.7 564 602 562C608.3 560 616.2 559.5 620 560C623.8 560.5 627.2 563 625 565C622.8 567 613.7 570 607 572C600.3 574 589.2 577 585 577C580.8 577 582.5 572.8 582 572" stroke-width="1.6" opacity="0.80"/>
<path d="M600 567C601.7 566.5 607 564.3 610 564C613 563.7 616.7 564.8 618 565" stroke-width="2.6" opacity="0.80"/>
<path d="M561 581C560.8 584 559.5 595.2 560 599C560.5 602.8 560.7 604 564 604C567.3 604 577.5 602.5 580 599C582.5 595.5 579.2 585.7 579 583" stroke-width="1.3" opacity="0.80"/>
<path d="M561 586C562.5 586.7 566.8 590.2 570 590C573.2 589.8 578.3 585.8 580 585" stroke-width="1.2" opacity="0.75"/>
<path d="M561 591C562.5 591.7 566.8 595.2 570 595C573.2 594.8 578.3 590.8 580 590" stroke-width="1.2" opacity="0.75"/>
<path d="M561 596C562.5 596.7 566.8 600.2 570 600C573.2 599.8 578.3 595.8 580 595" stroke-width="1.2" opacity="0.75"/>
<path d="M564 604C565 608.7 568.7 623.2 570 632C571.3 640.8 572.5 650.3 572 657C571.5 663.7 567.3 668.3 567 672C566.7 675.7 569.5 677.8 570 679" stroke-width="1.2" opacity="0.75"/>
<path d="M580 599C582 601.5 589.5 607.7 592 614C594.5 620.3 595.3 629 595 637C594.7 645 592.5 655 590 662C587.5 669 581.7 676.2 580 679" stroke-width="1.2" opacity="0.75"/>
<path d="M566 607C567.3 612 571.8 627.8 574 637C576.2 646.2 578.2 655.3 579 662C579.8 668.7 579 674.5 579 677" stroke-width="1.8" opacity="0.65"/>
<path d="M573 640C574.8 639.7 580.5 638 584 638C587.5 638 592.3 639.7 594 640" stroke-width="0.8" opacity="0.50"/>
<path d="M575 655C576.5 654.7 581.2 653 584 653C586.8 653 590.7 654.7 592 655" stroke-width="0.8" opacity="0.50"/>
<path d="M532 570C536.2 566.2 546.5 552.8 557 547C567.5 541.2 580.3 536.7 595 535C609.7 533.3 628.3 535 645 537C661.7 539 680.5 542.3 695 547C709.5 551.7 725.8 562 732 565" stroke-width="0.8" opacity="0.45"/>
<path d="M630 565C635 564.2 648.3 559.2 660 560C671.7 560.8 688.3 565.8 700 570C711.7 574.2 725 582.5 730 585" stroke-width="0.8" opacity="0.45"/>
<path d="M590 600C595 597.5 608.3 588.7 620 585C631.7 581.3 646.7 578.5 660 578C673.3 577.5 693.3 581.3 700 582" stroke-width="0.7" opacity="0.40"/>
<path d="M540 587C539.2 589.5 532.2 596.2 535 602C537.8 607.8 542.8 616.2 557 622C571.2 627.8 599.2 632.3 620 637C640.8 641.7 665 647 682 650C699 653 716.5 652 722 655C727.5 658 723.7 665.2 715 668C706.3 670.8 690 672.2 670 672C650 671.8 607.5 667.8 595 667" stroke-width="0.8" opacity="0.45"/>
<path d="M595 625C602.5 626.2 624.2 629.2 640 632C655.8 634.8 675.8 638.7 690 642C704.2 645.3 719.2 650.3 725 652" stroke-width="0.7" opacity="0.40"/>
<path d="M545 600C546.2 605 549.5 620 552 630C554.5 640 557.7 652.5 560 660C562.3 667.5 565 672.5 566 675" stroke-width="0.7" opacity="0.40"/>
<path d="M540 650C541.3 648.3 547.2 638.3 548 640C548.8 641.7 543.8 658.3 545 660C546.2 661.7 553.8 648.7 555 650C556.2 651.3 552.5 665 552 668" stroke-width="0.7" opacity="0.45"/>
<path d="M595 655C596.7 654.2 601.7 649.8 605 650C608.3 650.2 611.7 656 615 656C618.3 656 623.3 651 625 650" stroke-width="0.7" opacity="0.45"/>
<path d="M640 655C642.5 654.2 650.8 649.5 655 650C659.2 650.5 660.8 657.7 665 658C669.2 658.3 677.5 653 680 652" stroke-width="0.7" opacity="0.45"/>
<path d="M640 668C643.3 667.3 653.3 663.7 660 664C666.7 664.3 673.3 667.3 680 670C686.7 672.7 696.7 678.3 700 680" stroke-width="0.7" opacity="0.40"/>
<path d="M648 632C649.2 633 653 638 655 638C657 638 659.2 633 660 632" stroke-width="0.7" opacity="0.40"/>
<path d="M690 636C691.7 637 697 642 700 642C703 642 706.7 637 708 636" stroke-width="0.7" opacity="0.40"/>
<path d="M570 562C573.3 559.9 582.9 552.3 590 549.5C597.1 546.7 606.2 544.6 612.5 545C618.8 545.4 625 550.8 627.5 552" stroke-width="1.0" opacity="0.60"/>
<path d="M580 574.5C583.3 572.8 593.3 566.8 600 564.5C606.7 562.2 615.6 560.8 620 560.8C624.4 560.8 625.2 563.9 626.2 564.5" stroke-width="1.8" opacity="0.70"/>
<path d="M582.5 579.5C585.8 578 595.8 573 602.5 570.8C609.2 568.5 619.2 566.6 622.5 565.8" stroke-width="1.3" opacity="0.60"/>
<path d="M595 567C597.1 566.2 603.5 562.8 607.5 562C611.5 561.2 616.9 562 618.8 562" stroke-width="2.6" opacity="0.75"/>
<path d="M566.2 564.5L571.2 578.2" stroke-width="0.8" opacity="0.40"/>
<path d="M568.2 565L573.2 578.8" stroke-width="0.8" opacity="0.40"/>
<path d="M570.2 565.5L575.2 579.2" stroke-width="0.8" opacity="0.40"/>
<path d="M572.2 566L577.2 579.8" stroke-width="0.8" opacity="0.40"/>
<path d="M574.2 566.5L579.2 580.2" stroke-width="0.8" opacity="0.40"/>
<path d="M576.2 567L581.2 580.8" stroke-width="0.8" opacity="0.40"/>
<path d="M578.2 567.5L583.2 581.2" stroke-width="0.8" opacity="0.40"/>
<path d="M566.2 607C567.5 612 571.7 627.8 573.8 637C575.8 646.2 577.9 655.3 578.8 662C579.6 668.7 579 674.5 579 677" stroke-width="2.2" opacity="0.55"/>
<path d="M561.2 582L578.8 584.5" stroke-width="1.4" opacity="0.70"/>
<path d="M560 599.5L580 599.5" stroke-width="1.4" opacity="0.70"/>
<path d="M535 590.8C535.8 589.7 537.5 587.2 540 584.5C542.5 581.8 545 578.2 550 574.5C555 570.8 566.7 564.1 570 562" stroke-width="0.7" opacity="0.40"/>
<path d="M545 647C546.2 648.2 552.1 652 552.5 654.5C552.9 657 546.7 659.9 547.5 662C548.3 664.1 556.7 664.5 557.5 667C558.3 669.5 553.3 675.3 552.5 677" stroke-width="0.7" opacity="0.45"/>
<path d="M562.5 649.5C563.8 650.8 569.6 654.1 570 657C570.4 659.9 564.4 664.3 565 667C565.6 669.7 572.3 672.2 573.8 673.2" stroke-width="0.7" opacity="0.45"/>
<path d="M597.5 649.5C598.8 650.3 602.5 654.3 605 654.5C607.5 654.7 610 650.3 612.5 650.8C615 651.2 618.8 656 620 657" stroke-width="0.7" opacity="0.45"/>
<path d="M637.5 654.5C639.6 653.9 646.2 650.3 650 650.8C653.8 651.2 656.2 656.8 660 657C663.8 657.2 669.2 652 672.5 652C675.8 652 678.8 656.2 680 657" stroke-width="0.8" opacity="0.50"/>
<path d="M642.5 667C644.6 666.6 650.8 664.1 655 664.5C659.2 664.9 662.9 669.1 667.5 669.5C672.1 669.9 680 667.4 682.5 667" stroke-width="0.7" opacity="0.45"/>
<path d="M650 632C650.8 632.8 654.6 635.8 655 637C655.4 638.2 652.9 639.1 652.5 639.5" stroke-width="0.7" opacity="0.45"/>
<path d="M670 637C671.7 637.4 677.5 639.5 680 639.5C682.5 639.5 684.2 637.4 685 637" stroke-width="0.7" opacity="0.45"/>
<path d="M695 637C696.2 637.8 700 641.8 702.5 642C705 642.2 708.8 638.9 710 638.2" stroke-width="0.7" opacity="0.45"/>
<path d="M687.5 677C688.8 677.8 692.5 681.8 695 682C697.5 682.2 701.2 678.9 702.5 678.2" stroke-width="0.7" opacity="0.45"/>
<path d="M670 555C672 554.2 677 550.5 682 550C687 549.5 695.8 550.7 700 552C704.2 553.3 707 556.2 707 558C707 559.8 704.2 562.2 700 563C695.8 563.8 687 563.5 682 563C677 562.5 672 560.5 670 560" stroke-width="1.0" opacity="0.70"/>
<path d="M670 552L667 546" stroke-width="0.8" opacity="0.60"/>
<path d="M685 563C685.5 564.2 686.7 569.7 688 570C689.3 570.3 692.2 565.8 693 565" stroke-width="0.9" opacity="0.65"/>
<path d="M698 555L700 557" stroke-width="1.6" opacity="0.70"/>
</g>
</defs>
<rect x="524" y="105" width="336" height="211" fill="#fcfbfc"/>
<rect x="762" y="192" width="206.500" height="196" fill="#fbfbfb"/>
<rect x="524" y="319" width="172" height="209" fill="#f8f8fa"/>
<rect x="524" y="532" width="210" height="154" fill="#eff2f7"/>
<rect x="762" y="397" width="206" height="154" fill="#000"/>
<!-- soft shading -->
<g filter="url(#soft)" opacity=".75">
<path d="M545 172L630 150L690 142L700 160L660 195L600 215L545 225L575 195L620 178Z" fill="#e2dae8"/>
<path d="M560 245L610 215L660 225L740 240L700 252L630 255L590 285L545 295Z" fill="#dfd6e6"/>
<path d="M735 150L765 127L805 135L848 170L800 165L775 160L740 170Z" fill="#e3dbe8"/>
<path d="M820 268L940 255L955 250L930 246L890 247L830 258Z" fill="#c9c9c9"/>
<path d="M565 575L600 552L626 556L610 575L578 583Z" fill="#b9bcc4"/>
<path d="M562 582L580 584L580 600L563 604Z" fill="#b0b3bb"/>
<path d="M640 150L700 146L690 170L655 185L640 170Z" fill="#bdb6c2"/>
<path d="M575 235L630 240L632 255L590 280L565 285Z" fill="#c5bdcb"/>
<path d="M738 150L775 152L776 175L740 172Z" fill="#cfc8d4"/>
</g>
<g filter="url(#soft2)" opacity=".75">
<path d="M597 160L637 156L642 162L600 165Z" fill="#7d7d82"/>
<path d="M543 175L600 165L640 162L644 166L600 175Z" fill="#8f8a96"/>
<path d="M640 172L600 190L552 208L542 222L560 205L610 184Z" fill="#8f8a96"/>
<path d="M632 252L600 268L575 283L590 266Z" fill="#77727c"/>
<path d="M632 247L741 243L707 251L640 253Z" fill="#948e9a"/>
<path d="M665 226L720 231L744 240L700 238L650 240Z" fill="#cfc8d6"/>
<path d="M780 152L846 170L800 160Z" fill="#c5bfca"/>
<path d="M585 574L620 561L624 566L590 578Z" fill="#6d6d72"/>
<path d="M887 245L957 229L932 245Z" fill="#c4c4c4"/>
<path d="M825 262L930 252L950 252L925 262L850 268Z" fill="#b9b9bb"/>
<path d="M784 272L811 278L806 300L784 298Z" fill="#bdbdbf"/>
</g>
<path d="M813 232L837 232L840 240L823 258L805 259L801 245Z" fill="#c9c9cb" filter="url(#soft2)"/>
<use href="#pen" stroke="#55555a" filter="url(#pwob)" opacity=".55"/>
<use href="#pen" stroke="#46464b" filter="url(#pencil)"/>
<g fill="#2c2c30" opacity=".85"><ellipse cx="648" cy="150" rx="2.6" ry="1.8"/><ellipse cx="619" cy="236" rx="2.6" ry="2.4"/><ellipse cx="772.500" cy="138.500" rx="3" ry="1.8"/></g>
<g fill="#d8313a" opacity=".75"><circle cx="597" cy="440" r="1.8"/><circle cx="599" cy="443" r="1.3"/><circle cx="617" cy="445" r="1.8"/><circle cx="620" cy="446" r="1.2"/><circle cx="613" cy="462" r="1.8"/><circle cx="616" cy="464" r="1.2"/><circle cx="641" cy="525" r="1.2"/></g>
<g fill="#e6d37a" opacity=".7"><ellipse cx="552" cy="404" rx="3.500" ry="1.5" transform="rotate(-20 552 404)"/><circle cx="535" cy="450" r="1.5"/></g>
<!-- rabbit -->
<path d="M790 465L815 446L860 430L905 428L930 441L948 448L940 458L900 472L860 496L822 510L785 500Z" fill="#18261d" filter="url(#soft)" opacity=".6"/>
<use href="#rabbit" stroke="#aab8ad" filter="url(#pwob)" opacity=".6"/>
<use href="#rabbit" stroke="#6f8a78" filter="url(#rglow)" opacity=".8" stroke-width="2"/>
<g filter="url(#pencil)"><use href="#rabbit" stroke="#d5ddd6"/></g>
</svg>
<div class="abs" id="para">认识的提高除了字面的了解之外在很大程度上反映出<br>对所学内容的专注和兴趣所转化的一种热爱与痴迷。<br>对于学习的痴迷可使人们在认识上超出一般，用独有<br>的视角观察和认识问题，从而达到一种境界，获得一<br>种感受，这种感受不是浮在表面上能达到的，同时也<br>不在于学习时间的长短，关键是你学到了多少正确的<br>东西。</div>
<div class="abs" id="wm"><div id="wmc">中華設計論壇</div><div id="wme">bbs.chinade.net</div></div>
</body>
</html>
